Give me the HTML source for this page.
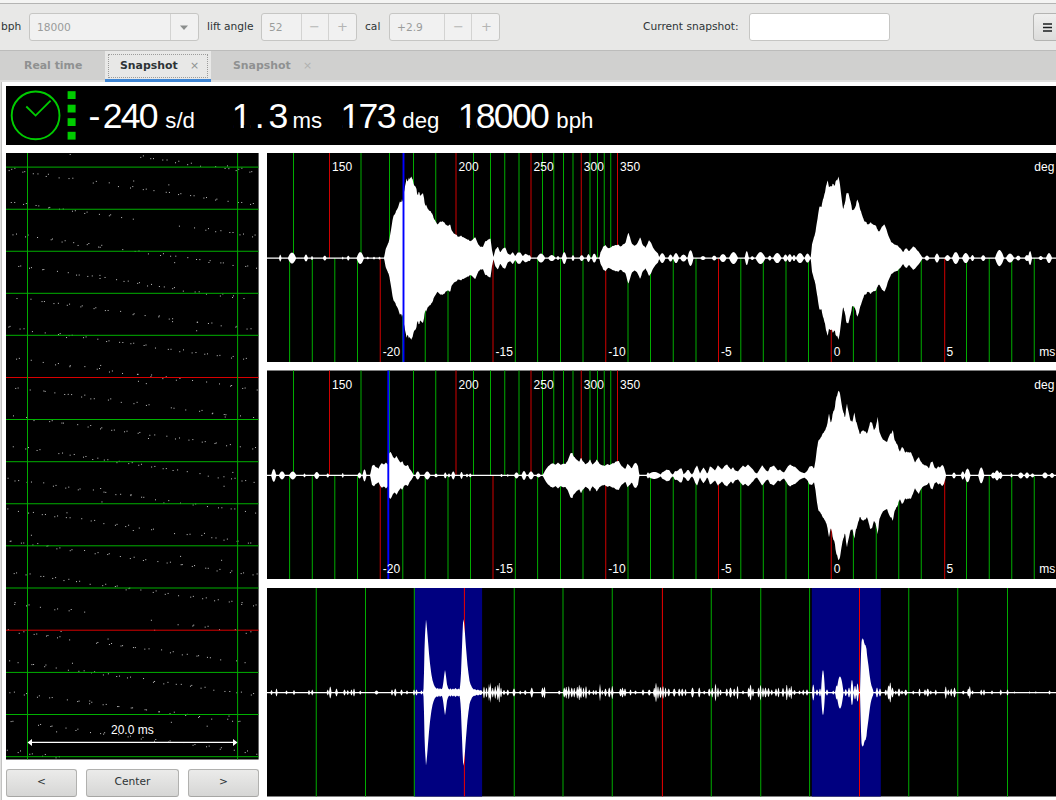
<!DOCTYPE html>
<html><head><meta charset="utf-8"><title>tg</title>
<style>
*{box-sizing:border-box;margin:0;padding:0}
html,body{width:1056px;height:800px;overflow:hidden;background:#fff;font-family:"DejaVu Sans","Liberation Sans",sans-serif;font-size:11px;color:#2e3436}
.abs{position:absolute}
#gfx{position:absolute;left:0;top:0}
#lb{position:absolute;left:0;top:82px;width:2px;height:718px;background:linear-gradient(90deg,#e0e0df 50%,#c2c2c1 50%)}
#top{position:absolute;left:0;top:0;width:1056px;height:51px;background:#e8e8e7;border-bottom:1px solid #bcbcbb}
#top:before{content:"";position:absolute;left:0;top:0;width:100%;height:3px;background:#f4f4f3}
#top:after{content:"";position:absolute;left:0;top:3px;width:100%;height:1px;background:#b4b4b3}
.lbl{position:absolute;top:20px;line-height:14px;font-size:10.67px;color:#2e3436;white-space:nowrap}
.box{position:absolute;top:13px;height:28px;border:1px solid #c6c6c4;border-radius:3px;background:#f1f1f1}
.box .t{position:absolute;left:7px;top:6.5px;line-height:14px;color:#9a9c9b;font-size:10.67px}
.sep{position:absolute;top:0;width:1px;height:26px;background:#d3d3d2}
.pm{position:absolute;top:6px;font-size:13px;line-height:14px;color:#b4b5b4;width:27px;text-align:center}
#tabs{position:absolute;left:0;top:51px;width:1056px;height:31px;background:#d0d0cf;border-bottom:2px solid #dfdfde}
.tab{position:absolute;top:0;height:31px;font-weight:bold;font-size:10.9px;line-height:14px;color:#8f9191}
.tab span{position:absolute;top:8px;white-space:nowrap}
#act{left:105px;width:106px;background:#e8e8e7;color:#2e3436;border-bottom:3px solid #3f86d4}
#act:before{content:"";position:absolute;left:3px;top:3px;right:3px;bottom:1px;border:1px dotted #9c9c9b}
.btn{position:absolute;top:768.5px;height:28px;border:1px solid #b1b1af;border-bottom-color:#a6a6a4;border-radius:3px;background:linear-gradient(#ebebea,#d6d6d5);text-align:center;line-height:24px;font-size:10.67px;color:#2e3436}
</style></head><body>
<svg id="gfx" width="1056" height="800" viewBox="0 0 1056 800" font-family="Liberation Sans, Arial, sans-serif">
<rect x="6" y="86" width="1050" height="59" fill="#000"/>
<circle cx="35.6" cy="115.4" r="23.9" fill="none" stroke="#00cc00" stroke-width="1.9"/>
<path d="M26.3 106.5L35.6 115.6L50.6 100.6" fill="none" stroke="#00cc00" stroke-width="1.8"/>
<rect x="67.6" y="91.2" width="8" height="7.8" fill="#00cc00"/>
<rect x="67.6" y="104.7" width="8" height="7.8" fill="#00cc00"/>
<rect x="67.6" y="118.2" width="8" height="7.8" fill="#00cc00"/>
<rect x="67.6" y="131.8" width="8" height="7.8" fill="#00cc00"/>
<g fill="#fff">
<text x="88.4" y="128" font-size="35.6">-</text>
<text x="102.7" y="128" font-size="35.6" letter-spacing="-1.7">240</text>
<text x="165.3" y="128" font-size="22.2">s/d</text>
<text x="231.7" y="128" font-size="35.6">1</text>
<path d="M233.79 124.9h6.87v3.6h-6.87zM243.8 124.9h6.61v3.6h-6.61z" fill="#000"/>
<text x="254.7" y="128" font-size="35.6">.</text>
<text x="268.5" y="128" font-size="35.6">3</text>
<text x="292.5" y="128" font-size="22.2">ms</text>
<text x="340.5" y="128" font-size="35.6" letter-spacing="-1.7">173</text>
<path d="M342.59 124.9h6.87v3.6h-6.87zM352.6 124.9h6.61v3.6h-6.61z" fill="#000"/>
<text x="402.3" y="128" font-size="22.2">deg</text>
<text x="457.7" y="128" font-size="35.6" letter-spacing="-1.7">18000</text>
<path d="M459.79 124.9h6.87v3.6h-6.87zM469.8 124.9h6.61v3.6h-6.61z" fill="#000"/>
<text x="556.3" y="128" font-size="22.2">bph</text>
</g>
<rect x="6" y="153" width="252.6" height="606.5" fill="#000"/>
<path d="M69.68 154.49h1M142.89 155.9h1M140.28 157.38h1M153.01 158.62h1M150.27 158.69h1M166.55 160h1M162.28 160.03h1M178.3 161.23h1M175.04 162.74h1M190.83 163.21h1M187.16 164.69h1M227.01 165.96h1M200.05 166.23h1M215.18 166.66h1M14.38 168.23h1M241.38 168.23h1M228.37 168.68h1M224.6 168.41h1M11.24 169.3h1M238.24 169.3h1M8.66 170.61h1M235.66 170.61h1M24.26 171.67h1M251.26 171.67h1M22.39 172.14h1M249.39 172.14h1M37.46 173.93h1M32.8 173.76h1M47.9 174.28h1M45.72 176.45h1M58.64 177.9h1M72.35 178.21h1M68.52 178.58h1M133.21 181h1M95.82 181.37h1M92.78 183.05h1M108.75 182.83h1M168.34 184.88h1M117.95 186.6h1M132.28 186.59h1M130.01 188.01h1M145.76 189.14h1M142.81 189.64h1M153.46 190.65h1M168.93 192.45h1M165.74 192.29h1M180.35 193.69h1M178.09 194.58h1M193.59 195.78h1M190.14 195.6h1M206.01 197.55h1M203.41 198.05h1M216.37 199.15h1M215.16 200.09h1M227.59 201.32h1M14.22 202.47h1M241.22 202.47h1M10.77 202.5h1M237.77 202.5h1M25.82 203.52h1M252.82 203.52h1M23.09 204.42h1M250.09 204.42h1M38.29 205.91h1M35.58 205.49h1M49.26 207.43h1M48.16 207.93h1M62.75 209.09h1M58.98 209.23h1M74.82 210.74h1M71.98 211.23h1M86.59 212.11h1M84.26 213.44h1M98.92 214.37h1M110.15 214.84h1M108.88 215.8h1M121.12 217.58h1M132.82 219.18h1M178.92 226.16h1M194.07 227.92h1M207.98 228.61h1M205.35 230.22h1M220.4 230.71h1M215.19 231.72h1M232.5 232.49h1M229.32 232.54h1M16 234.06h1M243 234.06h1M12.48 234.87h1M239.48 234.87h1M27.6 235.04h1M254.6 235.04h1M25.05 236.88h1M252.05 236.88h1M37.06 237.52h1M51.97 239.01h1M50.69 239.79h1M64.65 240.74h1M61.6 242.04h1M73.19 242.66h1M88.36 243.52h1M86.75 244.64h1M101.28 245.31h1M99.66 247.29h1M98.17 247.05h1M77.6 245.44h1M122.25 249.63h1M138.48 251.07h1M134.62 251.44h1M147.93 253.92h1M162.94 253.71h1M160.08 255.49h1M175.3 256.16h1M170.14 256.23h1M187.3 257.67h1M199.35 259.62h1M196.07 259.51h1M209.62 260.63h1M208.43 262.47h1M222.83 262.9h1M220.33 262.9h1M174.16 262.67h1M232.55 265.45h1M20.22 265.97h1M247.22 265.97h1M18.28 266.44h1M245.28 266.44h1M30.96 267.65h1M29.01 268.22h1M256.01 268.22h1M43.33 269.51h1M42.19 269.72h1M56.95 271.36h1M67.79 272.69h1M99.45 275.38h1M78.69 275.05h1M76.07 275.11h1M91.78 275.94h1M87.31 276.42h1M104.55 277.47h1M99.54 278.49h1M116.09 279.69h1M127.76 281.12h1M123.53 281.4h1M138.95 282.66h1M137.19 283.39h1M151.03 284.42h1M147.06 285.98h1M163.81 286.95h1M158.89 286.52h1M173.94 287.6h1M172.2 288.66h1M182.84 291.12h1M198.69 291.82h1M194.63 292.01h1M205.94 294.13h1M222.32 293.98h1M219.87 296.02h1M232.94 295.88h1M232.04 297.52h1M16.49 298.52h1M243.49 298.52h1M30.47 299.22h1M43.91 301.54h1M41.54 301.58h1M57.9 303.31h1M53.45 303.6h1M69.07 304.13h1M66.8 305.3h1M81.73 305.83h1M80.35 306.9h1M95.32 307.76h1M93.57 308.64h1M107.64 310.49h1M104.88 310.58h1M120.11 311.39h1M133.62 313.78h1M132.62 314.67h1M144.62 315.59h1M158.77 315.9h1M158.24 316.92h1M172.12 318.74h1M168.75 319.09h1M172.07 321.65h1M197.08 322.25h1M196.69 322.27h1M211.39 323.01h1M207.93 323.49h1M220.69 325.84h1M9.52 326.37h1M236.52 326.37h1M8.36 327.11h1M235.36 327.11h1M23.52 328.78h1M250.52 328.78h1M19.57 329.05h1M246.57 329.05h1M196.16 330.76h1M31.93 331.6h1M44.72 332.91h1M59.69 333.63h1M57.98 334.53h1M71.71 335.24h1M68.64 335.63h1M85.59 336.94h1M83.05 337.68h1M97.34 339.2h1M66.06 337.55h1M108.48 340.87h1M106.13 341.56h1M122.35 342.51h1M119.12 342.34h1M133.21 343.23h1M130.38 343.73h1M145.5 345h1M143.62 345.49h1M154.97 348.06h1M170.51 349.27h1M167.82 349.36h1M183.01 349.9h1M179.25 351.72h1M195.46 352.54h1M191.62 352.92h1M206.98 353.86h1M204.3 354.23h1M219.38 355.36h1M216.78 355.7h1M232.7 356.44h1M230.97 358.07h1M18.83 358.36h1M245.83 358.36h1M16.12 359.15h1M243.12 359.15h1M30.76 360.27h1M42.74 362.43h1M57.9 363.54h1M55.09 364.87h1M69.76 365.66h1M69.4 366.73h1M84.36 366.63h1M100.18 365.43h1M99.02 368.52h1M96.75 369.2h1M111.89 370.99h1M108.98 372.03h1M122.04 373.44h1M137.56 374.36h1M136.95 374.36h1M151.1 374.96h1M150.42 376.7h1M165.74 376.76h1M162.35 378.66h1M179.43 378.43h1M175.87 380.24h1M192.06 380.47h1M206.12 382.01h1M137.96 381.32h1M219.02 383.94h1M145.84 383.63h1M231.12 385.53h1M230.09 386.15h1M17.63 388.02h1M244.63 388.02h1M15.24 388.45h1M242.24 388.45h1M29.71 390.03h1M256.71 390.03h1M44.67 391.4h1M43.35 390.99h1M64.24 394.5h1M54.35 392.89h1M71.13 394.59h1M67.73 394.37h1M84.3 395.15h1M81.13 397.02h1M93.77 398.72h1M110.24 398.89h1M107.92 400.09h1M90.32 398.92h1M120.78 402.36h1M136.62 402.34h1M133.46 403.7h1M148.53 404.75h1M145.93 405.43h1M173.53 408.24h1M170.82 407.84h1M185.25 409.98h1M201.52 410.41h1M199.14 411.31h1M212.26 413.19h1M211.81 413.73h1M225.4 414.75h1M223.74 414.56h1M12.98 415.89h1M239.98 415.89h1M224.73 417.03h1M26.11 417.54h1M253.11 417.54h1M33.5 420.6h1M51.71 420.69h1M49.18 421.64h1M62.96 423.1h1M61.43 423.07h1M77.2 424.68h1M90.22 425.52h1M87.64 427.03h1M101.28 427.82h1M100.01 428.92h1M113.83 430.04h1M111.25 430.32h1M126.51 431.19h1M124.06 431.81h1M139.34 432.45h1M137.68 433.3h1M154.24 434.94h1M149.34 435.3h1M166.36 436.21h1M147.98 438.48h1M179.02 437.99h1M174.96 438.98h1M192.33 439.58h1M188.45 440.14h1M204.74 441.64h1M201.78 442.14h1M215.74 442.94h1M214.5 443.54h1M229.86 444.61h1M226.1 445.79h1M12.79 446.79h1M239.79 446.79h1M28.03 447.55h1M255.03 447.55h1M25.25 448.97h1M252.25 448.97h1M39.46 449.67h1M36.59 450.49h1M62.04 453.05h1M58.35 453.62h1M73.74 454.46h1M69.64 455.18h1M85.45 456.49h1M83.02 457.17h1M97.34 458.18h1M92.26 459.53h1M107.34 459.74h1M103.84 460.06h1M118.71 461.32h1M116.44 462.66h1M131.72 462.66h1M128.25 463.62h1M140.96 464.28h1M138.28 465.25h1M154.36 466.44h1M151.12 467.03h1M165.8 468.57h1M162.66 468.76h1M177.12 469.94h1M172.59 470.5h1M186.77 471.66h1M232.33 472.42h1M199.51 473.63h1M207.77 476.18h1M223.44 476.78h1M217.69 477.92h1M7.56 478.27h1M234.56 478.27h1M231.03 478.89h1M18.18 480.6h1M245.18 480.6h1M14.5 480.99h1M241.5 480.99h1M30.96 482.04h1M26.63 482.39h1M253.63 482.39h1M43.22 482.87h1M223.57 486.25h1M55.52 485.42h1M52.91 486.21h1M68.25 487.14h1M65.27 488.1h1M79.55 488.96h1M77.79 489.87h1M92.88 489.98h1M100.16 488.53h1M105.28 492.38h1M103.51 492.11h1M120.16 494.3h1M115.37 494.67h1M130.52 494.62h1M130.37 495.58h1M143.29 497.31h1M141.11 497.21h1M155.01 499.82h1M101.48 501.93h1M168.26 500.63h1M163.4 503.01h1M180.03 503.15h1M195.21 503.95h1M192.65 504.99h1M206.94 506.56h1M221.36 507.79h1M217.97 507.86h1M7.32 508.95h1M234.32 508.95h1M230.66 508.95h1M66.48 512.8h1M17.93 511.43h1M244.93 511.43h1M32.91 512.43h1M28.11 513.09h1M255.11 513.09h1M44.91 514.47h1M41.8 514.66h1M57.07 515.96h1M54.29 516.77h1M69.6 517.77h1M65.87 517.64h1M81.24 518.73h1M94.16 520.43h1M90.69 520.97h1M103.36 523.65h1M116.54 524.37h1M114.93 525.27h1M128.11 525.24h1M125.22 526.59h1M138.79 528.05h1M152.98 529.13h1M151.13 529.73h1M132.79 530.52h1M203.98 533.39h1M174.06 533.61h1M189.54 534.22h1M186.68 534.6h1M201.35 535.41h1M30.9 535.25h1M215.49 537.98h1M211.3 537.74h1M226.85 539.08h1M223.53 540.17h1M10.51 541.14h1M237.51 541.14h1M9.7 541.35h1M236.7 541.35h1M23.22 543h1M250.22 543h1M20.89 543.11h1M247.89 543.11h1M37.28 543.59h1M32.4 545.02h1M47.5 545.7h1M46.51 546.17h1M59.38 547.9h1M56.39 548.85h1M71.48 549.73h1M69.73 550.69h1M84.08 550.51h1M97.55 552.63h1M94.68 553.77h1M108.74 553.72h1M107.21 554.55h1M180.08 556.38h1M119.85 556.53h1M133.66 557.23h1M129.84 558.57h1M145.27 559.68h1M142.91 560.52h1M157.36 561.59h1M221.1 560.3h1M169.92 562.2h1M166.65 563.03h1M181.74 564.58h1M180.65 564.73h1M194.06 565.6h1M191.8 566.44h1M207.73 568.32h1M205.26 568.19h1M219.45 569.39h1M216.59 570.96h1M231.31 570.95h1M229.9 572.61h1M16.07 572.9h1M243.07 572.9h1M13.7 573.6h1M240.7 573.6h1M29.61 573.95h1M256.61 573.95h1M25.56 574.9h1M252.56 574.9h1M43.22 576.43h1M40.36 576.43h1M55.1 577.61h1M52.22 578.42h1M68.35 579.32h1M63.47 580.59h1M79.13 581.25h1M76.02 581.63h1M89.67 584.31h1M105.22 584.25h1M102.22 585.67h1M116.7 585.97h1M114.87 586.52h1M129.24 588.12h1M128.46 588.6h1M125.65 589.89h1M140.36 590.03h1M155.64 590.93h1M152.75 592.42h1M167.61 593.44h1M164.78 594.34h1M178.08 595.75h1M192.85 596.36h1M190.22 597.15h1M205.79 597.87h1M202.18 598.75h1M217.76 599.77h1M214.11 600.8h1M231.4 601.29h1M228.77 601.96h1M14.58 602.59h1M241.58 602.59h1M14.22 604.44h1M241.22 604.44h1M28.56 604.93h1M255.56 604.93h1M26.04 605.88h1M253.04 605.88h1M39.88 607.3h1M57.09 608.93h1M54.32 609.81h1M70.71 609.5h1M68.64 610.82h1M84.18 612.1h1M150.89 620.28h1M177.62 624.77h1M193.23 625.13h1M192.3 626.02h1M207.58 626.29h1M204.68 627.11h1M154.19 630.29h1M219.04 629.65h1M7.79 629.63h1M234.79 629.63h1M60.57 631.46h1M23.38 631.8h1M250.38 631.8h1M18.73 633.33h1M245.73 633.33h1M36.23 634.01h1M33.66 634.4h1M47.45 635.56h1M45.99 636.07h1M59.44 636.74h1M57.02 637.87h1M69.13 639.92h1M107.58 639.06h1M97.33 642.47h1M96.08 643.27h1M111.06 643.51h1M108.93 644.53h1M122.07 645.66h1M120.53 646.03h1M134.83 647.58h1M132.96 647.58h1M148.54 648.84h1M144.32 649.13h1M161.1 649.88h1M172.73 651.73h1M169.93 652.82h1M186.77 654.3h1M181.82 654.89h1M198.09 655.71h1M196.49 656.12h1M209.87 657.75h1M206.95 657.37h1M220.2 659.89h1M9.15 660.85h1M236.15 660.85h1M71.96 663.26h1M17.59 662.71h1M244.59 662.71h1M33.09 664.5h1M31.42 664.61h1M45.42 665.03h1M44.19 666.71h1M55.73 668.03h1M67.9 670.24h1M83.66 670.85h1M78.37 671.3h1M94.1 671.84h1M90.99 672.83h1M107.88 673.82h1M102.89 674.96h1M119.02 676.08h1M116.22 676.51h1M130.04 677.11h1M126.97 677.94h1M143.06 678.55h1M154.07 681.46h1M152.98 682.29h1M167.46 682.37h1M163.29 683.89h1M180.77 684.36h1M175.78 684.33h1M191.26 685.39h1M189.98 686.21h1M204.57 687.28h1M200.55 688.18h1M213.34 690.23h1M229.3 691.51h1M224.43 691.45h1M13.88 692.11h1M240.88 692.11h1M9.4 692.78h1M236.4 692.78h1M26.12 693.57h1M253.12 693.57h1M23.82 695h1M250.82 695h1M38.83 695.84h1M36.94 697.25h1M51.69 697.56h1M49.14 697.9h1M66.87 699.89h1M89.27 700.99h1M78.55 701.11h1M77.18 701.57h1M91.28 702.26h1M89.14 703.76h1M105.72 704.42h1M102.65 704.77h1M118.36 706.57h1M117.16 706.56h1M132.08 707.85h1M130.74 708.01h1M146.06 709.95h1M144.6 709.74h1M158.62 711.59h1M158.56 712.05h1M173.8 712.19h1M169.53 713.78h1M187.05 714.39h1M185.19 715.43h1M199.07 716.52h1M198.12 717.48h1M228.51 716.09h1M211.21 719.13h1M227.25 719.21h1M170.85 722.31h1M12.41 721.31h1M239.41 721.31h1M10.63 721.58h1M237.63 721.58h1M232.08 721.26h1M206.68 726.2h1M40.11 724.46h1M38.03 725.3h1M51.52 726.06h1M50.34 726.5h1M65.51 728.09h1M56.11 731.86h1M77.39 729.17h1M75.46 730.51h1M100.1 733.62h1M90 732.58h1M104.16 732.74h1M103.14 734.14h1M118.11 734.74h1M130.04 736.17h1M127.6 736.9h1M142.49 737.41h1M140.78 739.04h1M155.28 739.51h1M154.03 741.24h1M169.6 740.88h1M168.14 742.11h1M183.31 742.55h1M194.46 744.52h1M192.56 745.27h1M208.69 746.1h1M206.05 746.78h1M220.86 747.71h1M219.74 749.25h1M6.8 750.25h1M233.8 750.25h1M20 750.95h1M247 750.95h1M17.7 752.57h1M244.7 752.57h1M31.83 753.87h1M29.32 754.28h1M256.32 754.28h1M44.8 754.48h1M42.17 756.24h1M58.84 756.72h1M55.55 757.83h1" stroke="#c4c4c4" stroke-width="1" fill="none"/>
<rect x="6" y="166.6" width="252.6" height="1" fill="#00b000"/>
<rect x="6" y="208.75" width="252.6" height="1" fill="#00b000"/>
<rect x="6" y="250.75" width="252.6" height="1" fill="#00b000"/>
<rect x="6" y="292.8" width="252.6" height="1" fill="#00b000"/>
<rect x="6" y="334.8" width="252.6" height="1" fill="#00b000"/>
<rect x="6" y="377" width="252.6" height="1" fill="#d80000"/>
<rect x="6" y="419" width="252.6" height="1" fill="#00b000"/>
<rect x="6" y="461.2" width="252.6" height="1" fill="#00b000"/>
<rect x="6" y="503.25" width="252.6" height="1" fill="#00b000"/>
<rect x="6" y="545.3" width="252.6" height="1" fill="#00b000"/>
<rect x="6" y="587.5" width="252.6" height="1" fill="#00b000"/>
<rect x="6" y="629.7" width="252.6" height="1" fill="#d80000"/>
<rect x="6" y="671.9" width="252.6" height="1" fill="#00b000"/>
<rect x="6" y="714" width="252.6" height="1" fill="#00b000"/>
<rect x="6" y="756.2" width="252.6" height="1" fill="#00b000"/>
<rect x="27" y="153" width="1" height="606.5" fill="#00ac00"/>
<rect x="237.1" y="153" width="1" height="606.5" fill="#00ac00"/>
<path d="M27.5 742.4L32 738.9V741.7H233V738.9L237.5 742.4L233 745.9V743.1H32V745.9Z" fill="#fff"/>
<text x="132.3" y="734.4" font-size="12" fill="#fff" text-anchor="middle">20.0 ms</text>
<rect x="267" y="153" width="789" height="209" fill="#000"/>
<rect x="293" y="153" width="1" height="105.1" fill="#00ac00"/>
<rect x="329" y="153" width="1" height="105.1" fill="#d00000"/>
<rect x="360.5" y="153" width="1" height="105.1" fill="#00ac00"/>
<rect x="389" y="153" width="1" height="105.1" fill="#00ac00"/>
<rect x="413" y="153" width="1" height="105.1" fill="#00ac00"/>
<rect x="435.25" y="153" width="1" height="105.1" fill="#00ac00"/>
<rect x="455.5" y="153" width="1" height="105.1" fill="#d00000"/>
<rect x="473" y="153" width="1" height="105.1" fill="#00ac00"/>
<rect x="490" y="153" width="1" height="105.1" fill="#00ac00"/>
<rect x="504.25" y="153" width="1" height="105.1" fill="#00ac00"/>
<rect x="518.5" y="153" width="1" height="105.1" fill="#00ac00"/>
<rect x="530.5" y="153" width="1" height="105.1" fill="#d00000"/>
<rect x="542" y="153" width="1" height="105.1" fill="#00ac00"/>
<rect x="553.25" y="153" width="1" height="105.1" fill="#00ac00"/>
<rect x="563" y="153" width="1" height="105.1" fill="#00ac00"/>
<rect x="572.5" y="153" width="1" height="105.1" fill="#00ac00"/>
<rect x="580.75" y="153" width="1" height="105.1" fill="#d00000"/>
<rect x="589.5" y="153" width="1" height="105.1" fill="#00ac00"/>
<rect x="597" y="153" width="1" height="105.1" fill="#00ac00"/>
<rect x="603.75" y="153" width="1" height="105.1" fill="#00ac00"/>
<rect x="610.25" y="153" width="1" height="105.1" fill="#00ac00"/>
<rect x="617" y="153" width="1" height="105.1" fill="#d00000"/>
<rect x="289.1" y="258.1" width="1" height="103.9" fill="#00ac00"/>
<rect x="311.8" y="258.1" width="1" height="103.9" fill="#00ac00"/>
<rect x="334.3" y="258.1" width="1" height="103.9" fill="#00ac00"/>
<rect x="357" y="258.1" width="1" height="103.9" fill="#00ac00"/>
<rect x="379.75" y="258.1" width="1" height="103.9" fill="#d00000"/>
<rect x="402.3" y="258.1" width="1" height="103.9" fill="#00ac00"/>
<rect x="424.75" y="258.1" width="1" height="103.9" fill="#00ac00"/>
<rect x="447.5" y="258.1" width="1" height="103.9" fill="#00ac00"/>
<rect x="470" y="258.1" width="1" height="103.9" fill="#00ac00"/>
<rect x="492.5" y="258.1" width="1" height="103.9" fill="#d00000"/>
<rect x="514.8" y="258.1" width="1" height="103.9" fill="#00ac00"/>
<rect x="537.1" y="258.1" width="1" height="103.9" fill="#00ac00"/>
<rect x="560" y="258.1" width="1" height="103.9" fill="#00ac00"/>
<rect x="582.5" y="258.1" width="1" height="103.9" fill="#00ac00"/>
<rect x="605.25" y="258.1" width="1" height="103.9" fill="#d00000"/>
<rect x="627.5" y="258.1" width="1" height="103.9" fill="#00ac00"/>
<rect x="650" y="258.1" width="1" height="103.9" fill="#00ac00"/>
<rect x="672.75" y="258.1" width="1" height="103.9" fill="#00ac00"/>
<rect x="695.5" y="258.1" width="1" height="103.9" fill="#00ac00"/>
<rect x="718" y="258.1" width="1" height="103.9" fill="#d00000"/>
<rect x="740.3" y="258.1" width="1" height="103.9" fill="#00ac00"/>
<rect x="762.8" y="258.1" width="1" height="103.9" fill="#00ac00"/>
<rect x="785.5" y="258.1" width="1" height="103.9" fill="#00ac00"/>
<rect x="808" y="258.1" width="1" height="103.9" fill="#00ac00"/>
<rect x="830.75" y="258.1" width="1" height="103.9" fill="#d00000"/>
<rect x="852.9" y="258.1" width="1" height="103.9" fill="#00ac00"/>
<rect x="875.75" y="258.1" width="1" height="103.9" fill="#00ac00"/>
<rect x="898.25" y="258.1" width="1" height="103.9" fill="#00ac00"/>
<rect x="920.75" y="258.1" width="1" height="103.9" fill="#00ac00"/>
<rect x="944.2" y="258.1" width="1" height="103.9" fill="#d00000"/>
<rect x="966" y="258.1" width="1" height="103.9" fill="#00ac00"/>
<rect x="988.75" y="258.1" width="1" height="103.9" fill="#00ac00"/>
<rect x="1011.25" y="258.1" width="1" height="103.9" fill="#00ac00"/>
<rect x="1033.75" y="258.1" width="1" height="103.9" fill="#00ac00"/>
<path d="M267 257.52 279 257.52 279.5 255.93 280 254.75 280.5 254.75 281 255.93 281.5 257.52 287.5 257.52 288 257.46 288.5 256.39 289 255.44 289.5 254.61 290 253.91 290.5 253.35 291 252.94 291.5 252.68 292 252.6 292.5 252.68 293 252.94 293.5 253.35 294 253.91 294.5 254.61 295 255.44 295.5 256.39 296 257.46 296.5 257.52 304 257.52 304.5 256.63 305 255.54 305.5 254.84 306 254.6 306.5 254.84 307 255.54 307.5 256.63 308 257.52 310.5 257.52 311 257.4 311.5 256.45 312 256.1 312.5 256.45 313 257.4 313.5 257.52 323 257.52 323.5 256.63 324 255.98 324.5 255.64 325 255.64 325.5 255.98 326 256.63 326.5 257.52 341.5 257.52 342 257.47 342.5 256.7 343 256.7 343.5 257.47 344 257.52 346.5 257.52 347 257.36 347.5 256.27 348 255.68 348.5 255.68 349 256.27 349.5 257.36 350 257.52 356.5 257.52 357 256.64 357.5 255.43 358 254.38 358.5 253.51 359 252.83 359.5 252.36 360 252.13 360.5 252.13 361 252.36 361.5 252.83 362 253.51 362.5 254.38 363 255.43 363.5 256.64 364 257.52 366.5 257.52 367 257.15 367.5 256.84 368 256.84 368.5 257.15 369 257.52 372.5 257.52 373 257.4 373.5 256.96 374 256.8 374.5 256.96 375 257.4 375.5 257.52 378 257.52 378.5 257.4 379 256.96 379.5 256.8 380 256.96 380.5 257.4 381 257.52 384 257.52 384.5 255.33 385 252.69 385.5 250.05 386 248.26 386.5 247.32 387 245.99 387.5 245.02 388 243.56 388.5 242.69 389 240.87 389.5 239.06 390 235.72 390.5 232.83 391 229.93 391.5 226.85 392 223.57 392.5 220.29 393 217.96 393.5 215.89 394 214.96 394.5 214.69 395 213.77 395.5 212.95 396 210.93 396.5 210.17 397 209.41 397.5 208.57 398 207.43 398.5 205.91 399 204.29 399.5 202.77 400 201.25 400.5 202.33 401 201.98 401.5 201.63 402 199.1 402.5 201.64 403 200.37 403.5 196.89 404 191.95 404.5 189.72 405 186.15 405.5 183.89 406 181.62 406.5 178.38 407 179.91 407.5 181.44 408 180.7 408.5 179.15 409 177.61 409.5 179.38 410 178.53 410.5 177.69 411 177.28 411.5 176.44 412 178.73 412.5 178.73 413 181.1 413.5 183.46 414 184.92 414.5 185.64 415 186.37 415.5 186.54 416 187.82 416.5 189.1 417 193.18 417.5 194.4 418 195.14 418.5 191.96 419 192.22 419.5 192.48 420 195.65 420.5 195.52 421 195.03 421.5 194.41 422 193.91 422.5 193.42 423 193.37 423.5 195.63 424 197.89 424.5 202.26 425 204.43 425.5 206.12 426 204.5 426.5 205.77 427 207.05 427.5 208.37 428 209.13 428.5 209.39 429 210.55 429.5 210.8 430 211.05 430.5 211.11 431 212.12 431.5 213.14 432 213.36 432.5 214.39 433 215.42 433.5 217.65 434 218.65 434.5 219.65 435 220.36 435.5 221.25 436 222 436.5 222.95 437 223.71 437.5 224.46 438 223.92 438.5 223.41 439 222.89 439.5 222.37 440 221.86 440.5 221.47 441 221.92 441.5 221.66 442 221.41 442.5 221.34 443 221.59 443.5 222.34 444 221.95 444.5 222.72 445 223.5 445.5 224.4 446 224.66 446.5 224.92 447 225.42 447.5 225.67 448 225.55 448.5 225.67 449 225.17 449.5 224.68 450 224.53 450.5 225.51 451 227.97 451.5 230.11 452 230.85 452.5 231.6 453 232.27 453.5 233.02 454 233.77 454.5 233.86 455 234.2 455.5 234.53 456 234.61 456.5 234.95 457 235.29 457.5 236.48 458 236.64 458.5 236.64 459 236.45 460 236.45 460.5 235.87 461.5 235.87 462 236.85 462.5 237.1 463 237.34 463.5 237.32 464 237.57 464.5 237.9 465 238.1 465.5 238.43 466 238.77 466.5 238.97 467 239.3 467.5 239.64 468 239.61 468.5 239.79 469 239.96 469.5 240.89 470 241.05 470.5 241.21 471 240.58 471.5 240.75 472 240.24 472.5 239.7 473 239.18 473.5 238.67 474 238.2 474.5 237.69 475 237.17 475.5 237.78 476 239.05 476.5 240.32 477 241.47 477.5 242.75 478 243.65 478.5 244.83 479 245.32 479.5 245.81 480 246.38 480.5 246.75 481 246.99 481.5 246.53 482 246.78 482.5 247.04 483 246.85 483.5 245.6 484 244.34 484.5 242.91 485 241.64 485.5 240.88 486 241.33 486.5 241.08 487 240.84 487.5 240.08 488 239.76 488.5 239.36 489 239.4 489.5 239.01 490 238.61 490.5 239.06 491 242.6 491.5 246.15 492 250.22 492.5 252.31 493 254.64 493.5 256.98 494 254.98 494.5 252.98 495 250.97 495.5 249.59 496 248.84 496.5 248.44 497 247.72 497.5 246.99 498 247.1 498.5 248.32 499 249.55 499.5 250.65 500 251.89 500.5 252.1 501 251.34 501.5 250.59 502 249.84 502.5 248.91 503 248.4 503.5 248.14 504 248.01 504.5 247.76 505 247.5 505.5 248.1 506 249.35 506.5 250.6 507 251.96 507.5 253.1 508 253.85 508.5 254.1 509 254.35 509.5 254.6 510 254.85 510.5 254.68 511 254.08 511.5 253.48 512 252.88 512.5 252.28 513 252.4 513.5 253.25 514 254.1 514.5 254.95 515 255.8 515.5 255.85 516 255.1 516.5 254.35 517 253.6 517.5 252.85 518 252.48 520 252.48 520.5 252.85 521 253.6 521.5 254.35 522 255.1 522.5 255.85 523 255.98 523.5 255.48 524 254.98 524.5 254.48 525 253.98 525.5 253.84 526 254.07 526.5 254.29 527 254.52 527.5 254.75 528 254.98 528.5 255.56 529 255.15 529.5 255.15 530 255.56 530.5 256.33 531 257.41 531.5 257.52 537 257.52 537.5 256.7 538 255.93 538.5 255.25 539 254.67 539.5 254.21 540 253.87 540.5 253.67 541 253.6 541.5 253.67 542 253.87 542.5 254.21 543 254.67 543.5 255.25 544 255.93 544.5 256.7 545 257.52 548 257.52 548.5 257.37 549 256.76 549.5 256.24 550 255.8 550.5 255.46 551 255.23 551.5 255.11 552 255.11 552.5 255.23 553 255.46 553.5 255.8 554 256.24 554.5 256.76 555 257.37 555.5 257.52 556.5 257.52 557 257.03 557.5 256.34 558 256.1 558.5 256.34 559 257.03 559.5 257.52 561.5 257.52 562 256.97 562.5 255.15 563 253.71 563.5 252.69 564 252.17 564.5 252.17 565 252.69 565.5 253.71 566 255.15 566.5 256.97 567 257.52 571.5 257.52 572 256.49 572.5 255.46 573 255.1 573.5 255.46 574 256.49 574.5 257.52 579.5 257.52 580 256.63 580.5 255.9 581 255.4 581.5 255.13 582 255.13 582.5 255.4 583 255.9 583.5 256.63 584 257.52 586.5 257.52 587 256.41 587.5 255.17 588 254.38 588.5 254.1 589 254.38 589.5 255.17 590 256.41 590.5 257.52 591.5 257.52 592 257.25 592.5 255.89 593 254.81 593.5 254.04 594 253.65 594.5 253.65 595 254.04 595.5 254.81 596 255.89 596.5 257.25 597 257.52 599 257.52 599.5 256.95 600 254.65 600.5 252.35 601 251.42 601.5 250.56 602 249.58 602.5 248.61 603 247.04 603.5 246.52 604 246.01 604.5 245.9 605 245.41 605.5 244.91 606 245.76 606.5 246.5 607 247.24 607.5 247.57 608 248.34 608.5 248.08 609 248.19 609.5 247.95 610 247.7 610.5 247.43 611 247.19 611.5 246.94 612 246.36 612.5 246.11 613 245.85 613.5 245.9 614 245.75 614.5 245.6 615 245.16 615.5 245.01 616 244.91 616.5 245.14 617 245.04 617.5 244.94 618 244.42 618.5 244.68 619 244.93 619.5 245.98 620 246.22 620.5 246.47 621 246.21 621.5 245.96 622 245.72 622.5 244.74 623 244.48 623.5 243.97 624 244.21 624.5 243.72 625 243.23 625.5 242.63 626 240.88 626.5 239.12 627 236.96 627.5 235.32 628 233.81 628.5 232.64 629 234.29 629.5 235.94 630 237.36 630.5 239.14 631 240.93 631.5 242.48 632 243.64 632.5 244.15 633 244.55 633.5 245.06 634 245.57 634.5 245.72 635 245.46 635.5 245.2 636 244.81 636.5 244.55 637 243.87 637.5 243.02 638 241.94 638.5 240.85 639 239.95 639.5 238.71 640 237.47 640.5 238.11 641 239.59 641.5 241.07 642 243.2 642.5 244.25 643 245.3 643.5 245.71 644 246.03 644.5 246.35 645 247.34 645.5 247.64 646 246.73 646.5 245.76 647 244.84 647.5 243.93 648 242.44 648.5 241.36 649 240.28 649.5 240.7 650 241.39 650.5 242.09 651 242.64 651.5 243.87 652 245.1 652.5 246.33 653 247.56 653.5 248.29 654 249.06 654.5 249.79 655 250.53 655.5 251.08 656 251.58 656.5 252.1 657 252.6 657.5 253.1 658 253.6 658.5 255.1 659 256.6 659.5 256.72 660 255.59 660.5 254.65 661 253.9 661.5 253.39 662 253.13 662.5 253.13 663 253.39 663.5 253.9 664 254.65 664.5 255.59 665 256.72 665.5 257.52 668 257.52 668.5 256.88 669 255.93 669.5 255.21 670 254.75 670.5 254.6 671 254.75 671.5 255.21 672 255.93 672.5 256.88 673 257.52 673.5 256.62 674 255.42 674.5 254.44 675 253.71 675.5 253.25 676 253.1 676.5 253.25 677 253.71 677.5 254.44 678 255.42 678.5 256.62 679 257.52 680 257.52 680.5 257.19 681 256.45 681.5 255.81 682 255.3 682.5 254.91 683 254.68 683.5 254.6 684 254.68 684.5 254.91 685 255.3 685.5 255.81 686 256.45 686.5 257.19 687 257.52 687.5 257.52 688 255.73 688.5 253.81 689 252.24 689.5 251.17 690 250.42 690.5 250.18 691 250.42 691.5 251.12 692 252.24 692.5 253.81 693 255.73 693.5 257.52 700 257.52 700.5 257.51 701 257.03 701.5 256.64 702 256.34 702.5 256.16 703 256.1 703.5 256.16 704 256.34 704.5 256.64 705 257.03 705.5 257.51 706 257.52 712 257.52 712.5 256.87 713 256.27 713.5 255.85 714 255.63 714.5 255.63 715 255.85 715.5 256.27 716 256.87 716.5 257.52 719.5 257.52 720 256.71 720.5 255.96 721 255.31 721.5 254.79 722 254.41 722.5 254.18 723 254.1 723.5 254.18 724 254.41 724.5 254.79 725 255.31 725.5 255.96 726 256.71 726.5 257.52 729 257.52 729.5 256.86 730 255.82 730.5 254.88 731 254.07 731.5 253.38 732 252.83 732.5 252.43 733 252.18 733.5 252.1 734 252.18 734.5 252.43 735 252.83 735.5 253.38 736 254.07 736.5 254.88 737 255.82 737.5 256.86 738 257.52 744.5 257.52 745 256.49 745.5 253.98 746 252.17 746.5 251.17 747 251.32 747.5 252.17 748 253.98 748.5 256.49 749 257.52 750.5 257.52 751 256.92 751.5 256.41 752 256.13 752.5 256.13 753 256.41 753.5 256.92 754 257.52 755.5 257.52 756 256.97 756.5 256.01 757 255.15 757.5 254.38 758 253.71 758.5 253.14 759 252.69 759.5 252.36 760 252.17 760.5 252.1 761 252.17 761.5 252.36 762 252.69 762.5 253.14 763 253.71 763.5 254.38 764 255.15 764.5 256.01 765 256.97 765.5 257.52 768 257.52 768.5 256.63 769 255.98 769.5 255.64 770 255.64 770.5 255.98 771 256.63 771.5 257.52 773 257.52 773.5 257.01 774 256.1 774.5 255.29 775 254.6 775.5 254.02 776 253.57 776.5 253.27 777 253.12 777.5 253.12 778 253.27 778.5 253.57 779 254.02 779.5 254.6 780 255.29 780.5 256.1 781 257.01 781.5 257.52 783 257.52 783.5 256.88 784 255.93 784.5 255.21 785 254.75 785.5 254.6 786 254.75 786.5 255.21 787 255.93 787.5 256.88 788 256.13 788.5 255.17 789 254.49 789.5 254.14 790 254.14 790.5 254.49 791 255.17 791.5 256.13 792 257.35 792.5 256.84 793 255.9 793.5 255.31 794 255.1 794.5 255.31 795 255.9 795.5 256.84 796 257.51 796.5 256.54 797 255.68 797.5 254.93 798 254.29 798.5 253.78 799 253.4 799.5 253.18 800 253.1 800.5 253.18 801 253.4 801.5 253.78 802 254.29 802.5 254.93 803 255.68 803.5 256.54 804 257.51 804.5 257.52 805 256.77 805.5 255.69 806 254.81 806.5 254.15 807 253.74 807.5 253.6 808 253.74 808.5 254.15 809 254.81 809.5 255.69 810 256.77 810.5 257.52 811 254.85 811.5 249.64 812 244.51 812.5 242.58 813 240.87 813.5 238.97 814 237.07 814.5 235.88 815 233.8 815.5 231.72 816 227.91 816.5 224.87 817 221.82 817.5 219.09 818 215.16 818.5 211.97 819 209.04 819.5 206.56 820 206.87 820.5 206.4 821 206.72 821.5 207.03 822 203.63 822.5 201.42 823 199.21 823.5 198.2 824 196.03 824.5 193.87 825 192.62 825.5 189.31 826 185.99 826.5 184.76 827 182.58 827.5 180.4 828 181.95 828.5 184.65 829 187.36 829.5 186.83 830 186.48 830.5 186.13 831 186.11 831.5 186.35 832 186.6 832.5 183.71 833 183.97 833.5 183.92 834 185.76 834.5 185.4 835 185.05 835.5 181.68 836 180.72 836.5 179.75 837 180.8 837.5 179.54 838 178.29 838.5 176.46 839 178.98 839.5 181.51 840 184.82 840.5 188.99 841 193.16 841.5 197.26 842 201.2 842.5 205.13 843 208.18 843.5 208.65 844 205.59 844.5 204.61 845 202.46 845.5 200.32 846 195.81 846.5 193.58 847 192.85 847.5 193.47 848 192.76 848.5 193.47 849 195.57 849.5 197.71 850 199.85 850.5 201.19 851 203.42 851.5 205.64 852 209.71 852.5 210.01 853 210.32 853.5 209.55 854 209.86 854.5 208.43 855 207.84 855.5 206.44 856 205.21 856.5 201.68 857 200.58 857.5 199.47 858 201.21 858.5 202.49 859 203.76 859.5 206.79 860 208.64 860.5 210.49 861 211.33 861.5 213.22 862 214.66 862.5 216.2 863 217.64 863.5 218.73 864 220.61 864.5 221.34 865 222.07 865.5 221.49 866 222 866.5 222.25 867 224.05 867.5 224.3 868 224.54 868.5 224.16 869 223.92 869.5 223.67 870 222.75 870.5 222.5 871 222.5 871.5 223.61 872 223.85 872.5 224.09 873 224.59 873.5 224.83 874 225.08 874.5 225.07 875 225.32 875.5 225.56 876 225.77 876.5 227.26 877 228.76 877.5 229.13 878 230.68 878.5 231.09 879 231.79 879.5 231.08 880 230.38 880.5 229.44 881 228.52 881.5 227.6 882 226.4 882.5 226.16 883 225.91 883.5 225.1 884 224.84 884.5 224.59 885 225.76 885.5 227.03 886 228.29 886.5 229.47 887 231.28 887.5 233.09 888 234.59 888.5 236.02 889 237.05 889.5 238.13 890 239.16 890.5 240.18 891 241.68 891.5 242.17 892 242.66 892.5 242.8 893 243.3 893.5 243.68 894 244.26 894.5 244.5 895 244.75 895.5 244.77 896 245.02 896.5 245.27 897 245.15 897.5 245.41 898 245.67 898.5 246.7 899 247.19 899.5 247.67 900 248.01 900.5 248.5 901 249.12 901.5 249.86 902 250.6 902.5 251.34 903 251.88 903.5 251.72 904 250.63 904.5 249.88 905 248.83 905.5 248.83 906 248.42 907 248.42 907.5 249.52 908 250.13 908.5 250.73 909 251.3 909.5 250.82 910 250.33 910.5 249.44 911 248.93 911.5 248.42 912 247.96 912.5 247.25 913 246.54 913.5 246.57 914 246.92 914.5 247.26 915 247.49 915.5 248.11 916 248.72 916.5 249.45 917 250.06 917.5 250.67 918 250.99 918.5 251.62 919 252.35 919.5 253.06 920 253.78 920.5 254.49 921 255.21 921.5 255.92 922 256.64 922.5 257.35 923 257.52 924.5 257.52 925 257.23 925.5 256.55 926 256.03 926.5 255.71 927 255.6 927.5 255.71 928 256.03 928.5 256.55 929 257.23 929.5 257.52 934.5 257.52 935 256.54 935.5 255.31 936 254.38 936.5 253.8 937 253.6 937.5 253.8 938 254.38 938.5 255.31 939 256.54 939.5 257.52 944.5 257.52 945 257.21 945.5 256.49 946 255.9 946.5 255.46 947 255.19 947.5 255.1 948 255.19 948.5 255.46 949 255.9 949.5 256.49 950 257.21 950.5 257.52 952 257.52 952.5 256.64 953 255.43 953.5 254.38 954 253.51 954.5 252.83 955 252.36 955.5 252.13 956 252.13 956.5 252.36 957 252.83 957.5 253.51 958 254.38 958.5 255.43 959 256.64 959.5 257.52 962 257.52 962.5 256.88 963 255.87 963.5 255 964 254.27 964.5 253.71 965 253.32 965.5 253.12 966 253.12 966.5 253.32 967 253.71 967.5 254.27 968 255 968.5 255.87 969 256.88 969.5 257.52 970.5 257.52 971 256.84 971.5 255.9 972 255.31 972.5 255.1 973 255.31 973.5 255.9 974 256.84 974.5 257.52 981 257.52 981.5 256.63 982 255.9 982.5 255.4 983 255.13 983.5 255.13 984 255.4 984.5 255.9 985 256.63 985.5 257.52 995 257.52 995.5 256.45 996 255.05 996.5 253.81 997 252.73 997.5 251.67 998 250.92 998.5 250.38 999 250.12 999.5 250.01 1000 250.12 1000.5 250.79 1001 251.31 1001.5 252.02 1002 252.73 1002.5 253.81 1003 255.05 1003.5 256.45 1004 257.52 1006 257.52 1006.5 256.7 1007 255.93 1007.5 255.25 1008 254.67 1008.5 254.21 1009 253.87 1009.5 253.67 1010 253.6 1010.5 253.67 1011 253.87 1011.5 254.21 1012 254.67 1012.5 255.25 1013 255.93 1013.5 256.7 1014 257.52 1016 257.52 1016.5 256.87 1017 256.27 1017.5 255.85 1018 255.63 1018.5 255.63 1019 255.85 1019.5 256.27 1020 256.87 1020.5 257.52 1024.5 257.52 1025 257.06 1025.5 256.24 1026 255.62 1026.5 255.23 1027 255.1 1027.5 255.23 1028 255.62 1028.5 255.15 1029 252.98 1029.5 251.77 1030 251.31 1030.5 251.35 1031 252.98 1031.5 255.15 1032 257.52 1038.5 257.52 1039 257.12 1039.5 256.64 1040 256.3 1040.5 256.12 1041 256.12 1041.5 256.3 1042 256.64 1042.5 257.12 1043 257.52 1046 257.52 1046.5 256.62 1047 255.42 1047.5 254.44 1048 253.71 1048.5 253.25 1049 253.1 1049.5 253.25 1050 253.71 1050.5 254.44 1051 255.42 1051.5 256.62 1052 257.52 1056 257.52 L1056 258.68 1052 258.68 1051.5 259.58 1051 260.78 1050.5 261.76 1050 262.49 1049.5 262.95 1049 263.1 1048.5 262.95 1048 262.49 1047.5 261.76 1047 260.78 1046.5 259.58 1046 258.68 1043 258.68 1042.5 259.08 1042 259.56 1041.5 259.9 1041 260.08 1040.5 260.08 1040 259.9 1039.5 259.56 1039 259.08 1038.5 258.68 1032 258.68 1031.5 261.05 1031 263.22 1030.5 264.85 1030 264.89 1029.5 264.43 1029 263.22 1028.5 261.05 1028 260.58 1027.5 260.97 1027 261.1 1026.5 260.97 1026 260.58 1025.5 259.96 1025 259.14 1024.5 258.68 1020.5 258.68 1020 259.33 1019.5 259.93 1019 260.35 1018.5 260.57 1018 260.57 1017.5 260.35 1017 259.93 1016.5 259.33 1016 258.68 1014 258.68 1013.5 259.5 1013 260.27 1012.5 260.95 1012 261.53 1011.5 261.99 1011 262.33 1010.5 262.53 1010 262.6 1009.5 262.53 1009 262.33 1008.5 261.99 1008 261.53 1007.5 260.95 1007 260.27 1006.5 259.5 1006 258.68 1004 258.68 1003.5 259.75 1003 261.15 1002.5 262.39 1002 263.47 1001.5 264.18 1001 264.89 1000.5 265.41 1000 266.08 999.5 266.19 999 266.08 998.5 265.82 998 265.28 997.5 264.53 997 263.47 996.5 262.39 996 261.15 995.5 259.75 995 258.68 985.5 258.68 985 259.57 984.5 260.3 984 260.8 983.5 261.07 983 261.07 982.5 260.8 982 260.3 981.5 259.57 981 258.68 974.5 258.68 974 259.36 973.5 260.3 973 260.89 972.5 261.1 972 260.89 971.5 260.3 971 259.36 970.5 258.68 969.5 258.68 969 259.32 968.5 260.33 968 261.2 967.5 261.93 967 262.49 966.5 262.88 966 263.08 965.5 263.08 965 262.88 964.5 262.49 964 261.93 963.5 261.2 963 260.33 962.5 259.32 962 258.68 959.5 258.68 959 259.56 958.5 260.77 958 261.82 957.5 262.69 957 263.37 956.5 263.84 956 264.07 955.5 264.07 955 263.84 954.5 263.37 954 262.69 953.5 261.82 953 260.77 952.5 259.56 952 258.68 950.5 258.68 950 258.99 949.5 259.71 949 260.3 948.5 260.74 948 261.01 947.5 261.1 947 261.01 946.5 260.74 946 260.3 945.5 259.71 945 258.99 944.5 258.68 939.5 258.68 939 259.66 938.5 260.89 938 261.82 937.5 262.4 937 262.6 936.5 262.4 936 261.82 935.5 260.89 935 259.66 934.5 258.68 929.5 258.68 929 258.97 928.5 259.65 928 260.17 927.5 260.49 927 260.6 926.5 260.49 926 260.17 925.5 259.65 925 258.97 924.5 258.68 923 258.68 922.5 258.85 922 259.56 921.5 260.28 921 260.99 920.5 261.71 920 262.42 919.5 263.14 919 263.85 918.5 264.58 918 265.21 917.5 265.53 917 266.14 916.5 266.75 916 267.48 915.5 268.09 915 268.71 914.5 268.94 914 269.28 913.5 269.63 913 269.66 912.5 268.95 912 268.24 911.5 267.78 911 267.27 910.5 266.76 910 265.87 909.5 265.38 909 264.9 908.5 265.47 908 266.07 907.5 266.68 907 267.78 906 267.78 905.5 267.37 905 267.37 904.5 266.32 904 265.57 903.5 264.48 903 264.32 902.5 264.86 902 265.6 901.5 266.34 901 267.08 900.5 267.7 900 268.19 899.5 268.53 899 269.01 898.5 269.5 898 270.53 897.5 270.79 897 271.05 896.5 270.93 896 271.18 895.5 271.43 895 271.45 894.5 271.7 894 271.94 893.5 272.52 893 272.9 892.5 273.4 892 273.54 891.5 274.03 891 274.52 890.5 276.02 890 277.04 889.5 278.07 889 279.15 888.5 280.18 888 281.61 887.5 283.11 887 284.92 886.5 286.73 886 287.91 885.5 289.17 885 290.44 884.5 291.61 884 291.36 883.5 291.1 883 290.29 882.5 290.04 882 289.8 881.5 288.6 881 287.68 880.5 286.76 880 285.82 879.5 285.12 879 284.41 878.5 285.11 878 285.52 877.5 287.07 877 287.44 876.5 288.94 876 290.43 875.5 290.64 875 290.88 874.5 291.13 874 291.12 873.5 291.37 873 291.61 872.5 292.11 872 292.35 871.5 292.59 871 293.7 870.5 293.7 870 293.45 869.5 292.53 869 292.28 868.5 292.04 868 291.66 867.5 291.9 867 292.15 866.5 293.95 866 294.2 865.5 294.71 865 294.13 864.5 294.86 864 295.59 863.5 297.47 863 298.56 862.5 300 862 301.54 861.5 302.98 861 304.87 860.5 305.71 860 307.56 859.5 309.41 859 312.44 858.5 313.71 858 314.99 857.5 316.73 857 315.62 856.5 314.52 856 310.99 855.5 309.76 855 308.36 854.5 307.77 854 306.34 853.5 306.65 853 305.88 852.5 306.19 852 306.49 851.5 310.56 851 312.78 850.5 315.01 850 316.35 849.5 318.49 849 320.63 848.5 322.73 848 323.44 847.5 322.73 847 323.35 846.5 322.62 846 320.39 845.5 315.88 845 313.74 844.5 311.59 844 310.61 843.5 307.55 843 308.02 842.5 311.07 842 315 841.5 318.94 841 323.04 840.5 327.21 840 331.38 839.5 334.69 839 337.22 838.5 339.74 838 337.91 837.5 336.66 837 335.4 836.5 336.45 836 335.48 835.5 334.52 835 331.15 834.5 330.8 834 330.44 833.5 332.28 833 332.23 832.5 332.49 832 329.6 831.5 329.85 831 330.09 830.5 330.07 830 329.72 829.5 329.37 829 328.84 828.5 331.55 828 334.25 827.5 335.8 827 333.62 826.5 331.44 826 330.21 825.5 326.89 825 323.58 824.5 322.33 824 320.17 823.5 318 823 316.99 822.5 314.78 822 312.57 821.5 309.17 821 309.48 820.5 309.8 820 309.33 819.5 309.64 819 307.16 818.5 304.23 818 301.04 817.5 297.11 817 294.38 816.5 291.33 816 288.29 815.5 284.48 815 282.4 814.5 280.32 814 279.13 813.5 277.23 813 275.33 812.5 273.62 812 271.69 811.5 266.56 811 261.35 810.5 258.68 810 259.43 809.5 260.51 809 261.39 808.5 262.05 808 262.46 807.5 262.6 807 262.46 806.5 262.05 806 261.39 805.5 260.51 805 259.43 804.5 258.68 804 258.69 803.5 259.66 803 260.52 802.5 261.27 802 261.91 801.5 262.42 801 262.8 800.5 263.02 800 263.1 799.5 263.02 799 262.8 798.5 262.42 798 261.91 797.5 261.27 797 260.52 796.5 259.66 796 258.69 795.5 259.36 795 260.3 794.5 260.89 794 261.1 793.5 260.89 793 260.3 792.5 259.36 792 258.85 791.5 260.07 791 261.03 790.5 261.71 790 262.06 789.5 262.06 789 261.71 788.5 261.03 788 260.07 787.5 259.32 787 260.27 786.5 260.99 786 261.45 785.5 261.6 785 261.45 784.5 260.99 784 260.27 783.5 259.32 783 258.68 781.5 258.68 781 259.19 780.5 260.1 780 260.91 779.5 261.6 779 262.18 778.5 262.63 778 262.93 777.5 263.08 777 263.08 776.5 262.93 776 262.63 775.5 262.18 775 261.6 774.5 260.91 774 260.1 773.5 259.19 773 258.68 771.5 258.68 771 259.57 770.5 260.22 770 260.56 769.5 260.56 769 260.22 768.5 259.57 768 258.68 765.5 258.68 765 259.23 764.5 260.19 764 261.05 763.5 261.82 763 262.49 762.5 263.06 762 263.51 761.5 263.84 761 264.03 760.5 264.1 760 264.03 759.5 263.84 759 263.51 758.5 263.06 758 262.49 757.5 261.82 757 261.05 756.5 260.19 756 259.23 755.5 258.68 754 258.68 753.5 259.28 753 259.79 752.5 260.07 752 260.07 751.5 259.79 751 259.28 750.5 258.68 749 258.68 748.5 259.71 748 262.22 747.5 264.03 747 264.88 746.5 265.03 746 264.03 745.5 262.22 745 259.71 744.5 258.68 738 258.68 737.5 259.34 737 260.38 736.5 261.32 736 262.13 735.5 262.82 735 263.37 734.5 263.77 734 264.02 733.5 264.1 733 264.02 732.5 263.77 732 263.37 731.5 262.82 731 262.13 730.5 261.32 730 260.38 729.5 259.34 729 258.68 726.5 258.68 726 259.49 725.5 260.24 725 260.89 724.5 261.41 724 261.79 723.5 262.02 723 262.1 722.5 262.02 722 261.79 721.5 261.41 721 260.89 720.5 260.24 720 259.49 719.5 258.68 716.5 258.68 716 259.33 715.5 259.93 715 260.35 714.5 260.57 714 260.57 713.5 260.35 713 259.93 712.5 259.33 712 258.68 706 258.68 705.5 258.69 705 259.17 704.5 259.56 704 259.86 703.5 260.04 703 260.1 702.5 260.04 702 259.86 701.5 259.56 701 259.17 700.5 258.69 700 258.68 693.5 258.68 693 260.47 692.5 262.39 692 263.96 691.5 265.08 691 265.78 690.5 266.02 690 265.78 689.5 265.03 689 263.96 688.5 262.39 688 260.47 687.5 258.68 687 258.68 686.5 259.01 686 259.75 685.5 260.39 685 260.9 684.5 261.29 684 261.52 683.5 261.6 683 261.52 682.5 261.29 682 260.9 681.5 260.39 681 259.75 680.5 259.01 680 258.68 679 258.68 678.5 259.58 678 260.78 677.5 261.76 677 262.49 676.5 262.95 676 263.1 675.5 262.95 675 262.49 674.5 261.76 674 260.78 673.5 259.58 673 258.68 672.5 259.32 672 260.27 671.5 260.99 671 261.45 670.5 261.6 670 261.45 669.5 260.99 669 260.27 668.5 259.32 668 258.68 665.5 258.68 665 259.48 664.5 260.61 664 261.55 663.5 262.3 663 262.81 662.5 263.07 662 263.07 661.5 262.81 661 262.3 660.5 261.55 660 260.61 659.5 259.48 659 259.6 658.5 261.1 658 262.6 657.5 263.1 657 263.6 656.5 264.1 656 264.62 655.5 265.12 655 265.67 654.5 266.41 654 267.14 653.5 267.91 653 268.64 652.5 269.87 652 271.1 651.5 272.33 651 273.56 650.5 274.11 650 274.81 649.5 275.5 649 275.92 648.5 274.84 648 273.76 647.5 272.27 647 271.36 646.5 270.44 646 269.47 645.5 268.56 645 268.86 644.5 269.85 644 270.17 643.5 270.49 643 270.9 642.5 271.95 642 273 641.5 275.13 641 276.61 640.5 278.09 640 278.73 639.5 277.49 639 276.25 638.5 275.35 638 274.26 637.5 273.18 637 272.33 636.5 271.65 636 271.39 635.5 271 635 270.74 634.5 270.48 634 270.63 633.5 271.14 633 271.65 632.5 272.05 632 272.56 631.5 273.72 631 275.27 630.5 277.06 630 278.84 629.5 280.26 629 281.91 628.5 283.56 628 282.39 627.5 280.88 627 279.24 626.5 277.08 626 275.32 625.5 273.57 625 272.97 624.5 272.48 624 271.99 623.5 272.23 623 271.72 622.5 271.46 622 270.48 621.5 270.24 621 269.99 620.5 269.73 620 269.98 619.5 270.22 619 271.27 618.5 271.52 618 271.78 617.5 271.26 617 271.16 616.5 271.06 616 271.29 615.5 271.19 615 271.04 614.5 270.6 614 270.45 613.5 270.3 613 270.35 612.5 270.09 612 269.84 611.5 269.26 611 269.01 610.5 268.77 610 268.5 609.5 268.25 609 268.01 608.5 268.12 608 267.86 607.5 268.63 607 268.96 606.5 269.7 606 270.44 605.5 271.29 605 270.79 604.5 270.3 604 270.19 603.5 269.68 603 269.16 602.5 267.59 602 266.62 601.5 265.64 601 264.78 600.5 263.85 600 261.55 599.5 259.25 599 258.68 597 258.68 596.5 258.95 596 260.31 595.5 261.39 595 262.16 594.5 262.55 594 262.55 593.5 262.16 593 261.39 592.5 260.31 592 258.95 591.5 258.68 590.5 258.68 590 259.79 589.5 261.03 589 261.82 588.5 262.1 588 261.82 587.5 261.03 587 259.79 586.5 258.68 584 258.68 583.5 259.57 583 260.3 582.5 260.8 582 261.07 581.5 261.07 581 260.8 580.5 260.3 580 259.57 579.5 258.68 574.5 258.68 574 259.71 573.5 260.74 573 261.1 572.5 260.74 572 259.71 571.5 258.68 567 258.68 566.5 259.23 566 261.05 565.5 262.49 565 263.51 564.5 264.03 564 264.03 563.5 263.51 563 262.49 562.5 261.05 562 259.23 561.5 258.68 559.5 258.68 559 259.17 558.5 259.86 558 260.1 557.5 259.86 557 259.17 556.5 258.68 555.5 258.68 555 258.83 554.5 259.44 554 259.96 553.5 260.4 553 260.74 552.5 260.97 552 261.09 551.5 261.09 551 260.97 550.5 260.74 550 260.4 549.5 259.96 549 259.44 548.5 258.83 548 258.68 545 258.68 544.5 259.5 544 260.27 543.5 260.95 543 261.53 542.5 261.99 542 262.33 541.5 262.53 541 262.6 540.5 262.53 540 262.33 539.5 261.99 539 261.53 538.5 260.95 538 260.27 537.5 259.5 537 258.68 531.5 258.68 531 258.79 530.5 259.87 530 260.64 529.5 261.05 529 261.05 528.5 260.64 528 261.23 527.5 261.45 527 261.68 526.5 261.91 526 262.13 525.5 262.36 525 262.23 524.5 261.73 524 261.23 523.5 260.73 523 260.23 522.5 260.35 522 261.1 521.5 261.85 521 262.6 520.5 263.35 520 263.73 518 263.73 517.5 263.35 517 262.6 516.5 261.85 516 261.1 515.5 260.35 515 260.4 514.5 261.25 514 262.1 513.5 262.95 513 263.8 512.5 263.93 512 263.33 511.5 262.73 511 262.12 510.5 261.53 510 261.35 509.5 261.6 509 261.85 508.5 262.1 508 262.35 507.5 263.1 507 264.24 506.5 265.6 506 266.85 505.5 268.1 505 268.7 504.5 268.44 504 268.19 503.5 268.06 503 267.8 502.5 267.29 502 266.36 501.5 265.61 501 264.86 500.5 264.1 500 264.31 499.5 265.55 499 266.65 498.5 267.88 498 269.1 497.5 269.21 497 268.48 496.5 267.76 496 267.36 495.5 266.61 495 265.23 494.5 263.23 494 261.23 493.5 259.23 493 261.56 492.5 263.89 492 265.98 491.5 270.05 491 273.6 490.5 277.14 490 277.59 489.5 277.19 489 276.8 488.5 276.84 488 276.44 487.5 276.12 487 275.36 486.5 275.12 486 274.87 485.5 275.32 485 274.56 484.5 273.29 484 271.86 483.5 270.6 483 269.35 482.5 269.16 482 269.42 481.5 269.67 481 269.21 480.5 269.45 480 269.82 479.5 270.39 479 270.88 478.5 271.37 478 272.55 477.5 273.45 477 274.73 476.5 275.88 476 277.15 475.5 278.42 475 279.03 474.5 278.51 474 278 473.5 277.53 473 277.02 472.5 276.5 472 275.96 471.5 275.45 471 275.62 470.5 274.99 470 275.15 469.5 275.31 469 276.24 468.5 276.41 468 276.59 467.5 276.56 467 276.9 466.5 277.23 466 277.43 465.5 277.77 465 278.1 464.5 278.3 464 278.63 463.5 278.88 463 278.86 462.5 279.1 462 279.35 461.5 280.33 460.5 280.33 460 279.75 459 279.75 458.5 279.56 458 279.56 457.5 279.72 457 280.91 456.5 281.25 456 281.59 455.5 281.67 455 282 454.5 282.34 454 282.43 453.5 283.18 453 283.93 452.5 284.6 452 285.35 451.5 286.09 451 288.23 450.5 290.69 450 291.67 449.5 291.52 449 291.03 448.5 290.53 448 290.65 447.5 290.53 447 290.78 446.5 291.28 446 291.54 445.5 291.8 445 292.7 444.5 293.48 444 294.25 443.5 293.86 443 294.61 442.5 294.86 442 294.79 441.5 294.54 441 294.28 440.5 294.73 440 294.34 439.5 293.83 439 293.31 438.5 292.79 438 292.28 437.5 291.74 437 292.49 436.5 293.25 436 294.2 435.5 294.95 435 295.84 434.5 296.55 434 297.55 433.5 298.55 433 300.78 432.5 301.81 432 302.84 431.5 303.06 431 304.08 430.5 305.09 430 305.15 429.5 305.4 429 305.65 428.5 306.81 428 307.07 427.5 307.83 427 309.15 426.5 310.43 426 311.7 425.5 310.08 425 311.77 424.5 313.94 424 318.31 423.5 320.57 423 322.83 422.5 322.78 422 322.29 421.5 321.79 421 321.17 420.5 320.68 420 320.55 419.5 323.72 419 323.98 418.5 324.24 418 321.06 417.5 321.8 417 323.02 416.5 327.1 416 328.38 415.5 329.66 415 329.83 414.5 330.56 414 331.28 413.5 332.74 413 335.1 412.5 337.47 412 337.47 411.5 339.76 411 338.92 410.5 338.51 410 337.67 409.5 336.82 409 338.59 408.5 337.05 408 335.5 407.5 334.76 407 336.29 406.5 337.82 406 334.58 405.5 332.31 405 330.05 404.5 326.48 404 324.25 403.5 319.31 403 315.83 402.5 314.56 402 317.1 401.5 314.57 401 314.22 400.5 313.87 400 314.95 399.5 313.43 399 311.91 398.5 310.29 398 308.77 397.5 307.63 397 306.79 396.5 306.03 396 305.27 395.5 303.25 395 302.43 394.5 301.51 394 301.24 393.5 300.31 393 298.24 392.5 295.91 392 292.63 391.5 289.35 391 286.27 390.5 283.37 390 280.48 389.5 277.14 389 275.33 388.5 273.51 388 272.64 387.5 271.18 387 270.21 386.5 268.88 386 267.94 385.5 266.15 385 263.51 384.5 260.87 384 258.68 381 258.68 380.5 258.8 380 259.24 379.5 259.4 379 259.24 378.5 258.8 378 258.68 375.5 258.68 375 258.8 374.5 259.24 374 259.4 373.5 259.24 373 258.8 372.5 258.68 369 258.68 368.5 259.05 368 259.36 367.5 259.36 367 259.05 366.5 258.68 364 258.68 363.5 259.56 363 260.77 362.5 261.82 362 262.69 361.5 263.37 361 263.84 360.5 264.07 360 264.07 359.5 263.84 359 263.37 358.5 262.69 358 261.82 357.5 260.77 357 259.56 356.5 258.68 350 258.68 349.5 258.84 349 259.93 348.5 260.52 348 260.52 347.5 259.93 347 258.84 346.5 258.68 344 258.68 343.5 258.73 343 259.5 342.5 259.5 342 258.73 341.5 258.68 326.5 258.68 326 259.57 325.5 260.22 325 260.56 324.5 260.56 324 260.22 323.5 259.57 323 258.68 313.5 258.68 313 258.8 312.5 259.75 312 260.1 311.5 259.75 311 258.8 310.5 258.68 308 258.68 307.5 259.57 307 260.66 306.5 261.36 306 261.6 305.5 261.36 305 260.66 304.5 259.57 304 258.68 296.5 258.68 296 258.74 295.5 259.81 295 260.76 294.5 261.59 294 262.29 293.5 262.85 293 263.26 292.5 263.52 292 263.6 291.5 263.52 291 263.26 290.5 262.85 290 262.29 289.5 261.59 289 260.76 288.5 259.81 288 258.74 287.5 258.68 281.5 258.68 281 260.27 280.5 261.45 280 261.45 279.5 260.27 279 258.68 267 258.68Z" fill="#fff"/>
<rect x="402.55" y="153" width="1.9" height="209" fill="#0000ff"/>
<g font-size="12" fill="#fff">
<text x="332.1" y="171.2">150</text>
<text x="458.6" y="171.2">200</text>
<text x="533.6" y="171.2">250</text>
<text x="583.85" y="171.2">300</text>
<text x="620.1" y="171.2">350</text>
<text x="1034.3" y="171.2">deg</text>
<text x="382.85" y="355.9">-20</text>
<text x="495.6" y="355.9">-15</text>
<text x="608.35" y="355.9">-10</text>
<text x="721.1" y="355.9">-5</text>
<text x="833.85" y="355.9">0</text>
<text x="946.6" y="355.9">5</text>
<text x="1039.3" y="355.9">ms</text>
</g>
<rect x="267" y="370.5" width="789" height="208.5" fill="#000"/>
<rect x="293" y="370.5" width="1" height="104.95" fill="#00ac00"/>
<rect x="329" y="370.5" width="1" height="104.95" fill="#d00000"/>
<rect x="360.5" y="370.5" width="1" height="104.95" fill="#00ac00"/>
<rect x="389" y="370.5" width="1" height="104.95" fill="#00ac00"/>
<rect x="413" y="370.5" width="1" height="104.95" fill="#00ac00"/>
<rect x="435.25" y="370.5" width="1" height="104.95" fill="#00ac00"/>
<rect x="455.5" y="370.5" width="1" height="104.95" fill="#d00000"/>
<rect x="473" y="370.5" width="1" height="104.95" fill="#00ac00"/>
<rect x="490" y="370.5" width="1" height="104.95" fill="#00ac00"/>
<rect x="504.25" y="370.5" width="1" height="104.95" fill="#00ac00"/>
<rect x="518.5" y="370.5" width="1" height="104.95" fill="#00ac00"/>
<rect x="530.5" y="370.5" width="1" height="104.95" fill="#d00000"/>
<rect x="542" y="370.5" width="1" height="104.95" fill="#00ac00"/>
<rect x="553.25" y="370.5" width="1" height="104.95" fill="#00ac00"/>
<rect x="563" y="370.5" width="1" height="104.95" fill="#00ac00"/>
<rect x="572.5" y="370.5" width="1" height="104.95" fill="#00ac00"/>
<rect x="580.75" y="370.5" width="1" height="104.95" fill="#d00000"/>
<rect x="589.5" y="370.5" width="1" height="104.95" fill="#00ac00"/>
<rect x="597" y="370.5" width="1" height="104.95" fill="#00ac00"/>
<rect x="603.75" y="370.5" width="1" height="104.95" fill="#00ac00"/>
<rect x="610.25" y="370.5" width="1" height="104.95" fill="#00ac00"/>
<rect x="617" y="370.5" width="1" height="104.95" fill="#d00000"/>
<rect x="289.1" y="475.45" width="1" height="103.55" fill="#00ac00"/>
<rect x="311.8" y="475.45" width="1" height="103.55" fill="#00ac00"/>
<rect x="334.3" y="475.45" width="1" height="103.55" fill="#00ac00"/>
<rect x="357" y="475.45" width="1" height="103.55" fill="#00ac00"/>
<rect x="379.75" y="475.45" width="1" height="103.55" fill="#d00000"/>
<rect x="402.3" y="475.45" width="1" height="103.55" fill="#00ac00"/>
<rect x="424.75" y="475.45" width="1" height="103.55" fill="#00ac00"/>
<rect x="447.5" y="475.45" width="1" height="103.55" fill="#00ac00"/>
<rect x="470" y="475.45" width="1" height="103.55" fill="#00ac00"/>
<rect x="492.5" y="475.45" width="1" height="103.55" fill="#d00000"/>
<rect x="514.8" y="475.45" width="1" height="103.55" fill="#00ac00"/>
<rect x="537.1" y="475.45" width="1" height="103.55" fill="#00ac00"/>
<rect x="560" y="475.45" width="1" height="103.55" fill="#00ac00"/>
<rect x="582.5" y="475.45" width="1" height="103.55" fill="#00ac00"/>
<rect x="605.25" y="475.45" width="1" height="103.55" fill="#d00000"/>
<rect x="627.5" y="475.45" width="1" height="103.55" fill="#00ac00"/>
<rect x="650" y="475.45" width="1" height="103.55" fill="#00ac00"/>
<rect x="672.75" y="475.45" width="1" height="103.55" fill="#00ac00"/>
<rect x="695.5" y="475.45" width="1" height="103.55" fill="#00ac00"/>
<rect x="718" y="475.45" width="1" height="103.55" fill="#d00000"/>
<rect x="740.3" y="475.45" width="1" height="103.55" fill="#00ac00"/>
<rect x="762.8" y="475.45" width="1" height="103.55" fill="#00ac00"/>
<rect x="785.5" y="475.45" width="1" height="103.55" fill="#00ac00"/>
<rect x="808" y="475.45" width="1" height="103.55" fill="#00ac00"/>
<rect x="830.75" y="475.45" width="1" height="103.55" fill="#d00000"/>
<rect x="852.9" y="475.45" width="1" height="103.55" fill="#00ac00"/>
<rect x="875.75" y="475.45" width="1" height="103.55" fill="#00ac00"/>
<rect x="898.25" y="475.45" width="1" height="103.55" fill="#00ac00"/>
<rect x="920.75" y="475.45" width="1" height="103.55" fill="#00ac00"/>
<rect x="944.2" y="475.45" width="1" height="103.55" fill="#d00000"/>
<rect x="966" y="475.45" width="1" height="103.55" fill="#00ac00"/>
<rect x="988.75" y="475.45" width="1" height="103.55" fill="#00ac00"/>
<rect x="1011.25" y="475.45" width="1" height="103.55" fill="#00ac00"/>
<rect x="1033.75" y="475.45" width="1" height="103.55" fill="#00ac00"/>
<path d="M267 474.87 271 474.87 271.5 474.23 272 472.26 272.5 470.69 273 469.59 273.5 469.21 274 469.21 274.5 469.59 275 470.69 275.5 472.26 276 474.23 276.5 474.87 278.5 474.87 279 474.85 279.5 473.88 280 473.05 280.5 472.37 281 471.86 281.5 471.55 282 471.45 282.5 471.55 283 471.86 283.5 472.37 284 473.05 284.5 473.88 285 474.85 285.5 474.87 289 474.87 289.5 474.48 290 473.67 290.5 472.97 291 472.39 291.5 471.94 292 471.63 292.5 471.47 293 471.47 293.5 471.63 294 471.94 294.5 472.39 295 472.97 295.5 473.67 296 474.48 296.5 474.87 303 474.87 303.5 474.75 304 473.8 304.5 473.45 305 473.8 305.5 474.75 306 474.87 314 474.87 314.5 474.33 315 473.44 315.5 472.73 316 472.24 316.5 471.98 317 471.98 317.5 472.24 318 472.73 318.5 473.44 319 474.33 319.5 474.87 326 474.87 326.5 474.86 327 473.99 327.5 473.51 328 473.51 328.5 473.99 329 474.86 329.5 474.87 341.5 474.87 342 474.4 342.5 473.12 343 473.12 343.5 474.4 344 474.87 357.5 474.87 358 474.19 358.5 473.25 359 472.66 359.5 472.45 360 472.66 360.5 473.25 361 474.19 361.5 474.87 362.5 474.87 363 472.92 363.5 471.06 364 469.86 364.5 469.45 365 469.86 365.5 471.06 366 472.92 366.5 474.87 370 474.87 370.5 473.06 371 470.77 371.5 468.4 372 465.94 372.5 465.62 373 465.29 373.5 464.98 374 464.66 374.5 465.18 375 466.15 375.5 466.64 376 467.13 376.5 467.22 377 467.54 377.5 467.86 378 468.35 378.5 468.66 379 467.58 379.5 466.56 380 465.49 380.5 464.7 381 464.03 381.5 463.53 382 463.02 382.5 463.73 383 463.97 383.5 464.22 384 464.43 384.5 464 385 463.57 385.5 462.89 386 462.46 386.5 463.17 387 463.49 387.5 464.23 388 464.6 388.5 465.29 389 453.2 389.5 453.2 390 452.11 390.5 452.11 391 452.65 391.5 453.61 392 454.69 392.5 455.78 393 456.97 393.5 457.4 394 457.83 394.5 458.52 395 458.03 395.5 457.54 396 456.53 396.5 456.03 397 456.97 397.5 457.89 398 458.83 398.5 459.78 399 460.47 399.5 461.2 400 461.92 400.5 462.59 401 462.28 401.5 461.98 402 461.14 402.5 461.53 403 462.62 403.5 464 404 465.06 404.5 465.37 405 465.5 405.5 465.81 406 466.13 406.5 465.65 407 465.28 407.5 464.92 408 465.18 408.5 466.29 409 467.39 409.5 468.72 410 469.34 410.5 469.95 411 470.57 411.5 471.2 412 472.06 412.5 472.91 413 473.77 413.5 474.87 415 474.87 415.5 474.7 416 473.48 416.5 472.52 417 471.84 417.5 471.49 418 471.49 418.5 471.84 419 472.52 419.5 473.48 420 474.7 420.5 474.87 424 474.87 424.5 474.35 425 473.44 425.5 472.69 426 472.09 426.5 471.68 427 471.48 427.5 471.48 428 471.68 428.5 472.09 429 472.69 429.5 473.44 430 474.35 430.5 474.87 434 474.87 434.5 474.69 435 474.13 435.5 473.77 436 473.65 436.5 473.77 437 474.13 437.5 474.69 438 474.87 443.5 474.87 444 474.56 444.5 473.25 445 472.54 445.5 472.54 446 473.25 446.5 474.56 447 474.87 447.5 474.87 448 474.75 448.5 473.8 449 473.45 449.5 473.8 450 474.75 450.5 474.87 451 474.87 451.5 474.53 452 473.09 452.5 472.06 453 471.52 453.5 471.52 454 472.06 454.5 473.09 455 474.53 455.5 474.87 460 474.87 460.5 473.57 461 472.37 461.5 471.95 462 472.37 462.5 473.57 463 474.87 465.5 474.87 466 474.82 466.5 473.96 467 473.65 467.5 473.96 468 474.82 468.5 474.87 469 474.87 469.5 474.21 470 473.54 470.5 473.54 471 474.21 471.5 474.87 500.5 474.87 501 474.21 501.5 473.95 502 474.21 502.5 474.87 507 474.87 507.5 474.24 508 474.24 508.5 474.87 514 474.87 514.5 474.41 515 473.59 515.5 472.97 516 472.58 516.5 472.45 517 472.58 517.5 472.97 518 473.59 518.5 474.41 519 474.87 521.5 474.87 522 473.89 522.5 472.66 523 471.73 523.5 471.15 524 470.95 524.5 471.15 525 471.73 525.5 472.66 526 473.89 526.5 474.87 528 474.87 528.5 474.26 529 473.31 529.5 472.52 530 471.94 530.5 471.57 531 471.45 531.5 471.57 532 471.94 532.5 472.52 533 473.31 533.5 474.26 534 474.87 536 474.87 536.5 474.75 537 474.21 537.5 473.8 538 473.54 538.5 473.45 539 473.54 539.5 473.8 540 474.21 540.5 474.75 541 474.87 542.5 474.87 543 474.45 543.5 473.55 544 472.65 544.5 471.75 545 470.85 545.5 469.95 546 469.25 546.5 468.5 547 467.76 547.5 467.22 548 466.49 548.5 466.1 549 465.7 549.5 465.31 550 464.92 550.5 464.22 551 464.02 551.5 463.82 552 463.58 552.5 463.38 553 463.18 553.5 463.58 554 463.93 554.5 464.27 555 464.52 555.5 464.87 556 464.37 556.5 463.99 557 463.49 557.5 462.99 558 462.42 558.5 462.93 559 463.43 559.5 463.81 560 464.32 560.5 464.83 561 464.64 561.5 464.39 562 464.14 562.5 463.93 563 463.67 563.5 463.77 564 463.71 564.5 463.81 565 463.91 565.5 463.89 566 463.02 566.5 462.14 567 461.79 567.5 460.94 568 460.1 568.5 458.62 569 457.37 569.5 456.11 570 454.59 570.5 453.31 571 453.31 571.5 452.97 572.5 452.97 573 455.23 573.5 456.06 574 456.89 574.5 457.12 575 457.77 575.5 458.41 576 458.93 576.5 459.58 577 460.08 577.5 460.29 578 460.64 578.5 461 579 461.65 579.5 461.22 580 460.02 580.5 458.85 581 457.65 581.5 458.57 582 459.81 582.5 460.72 583 461.62 583.5 461.68 584 462.29 584.5 462.89 585 463.66 585.5 464.26 586 463.91 586.5 463.61 587 463.26 587.5 462.92 588 462.61 588.5 461.99 589 461.37 589.5 460.14 590 459.49 590.5 460.37 591 462.04 591.5 462.87 592 463.69 592.5 464.53 593 464.19 593.5 463.85 594 462.99 594.5 462.64 595 462.28 595.5 461.8 596 460.76 596.5 459.72 597 459.68 597.5 460.65 598 461.62 598.5 462.02 599 463.03 599.5 463.67 600 464.19 600.5 464.44 601 464.68 601.5 465.11 602 465.35 602.5 465.6 603 465.29 603.5 465.54 604 465.8 604.5 466.04 605 465.64 605.5 465.24 606 464.94 606.5 464.54 607 464.42 607.5 464.12 608 464.27 608.5 464.43 609 464.97 609.5 464.92 610 464.68 610.5 464.41 611 464.16 611.5 463.92 612 463.4 612.5 463.3 613 463.2 613.5 463.3 614 463.2 614.5 462.95 615 462.26 615.5 461.85 616 461.44 616.5 461.38 617 461.23 617.5 461.33 618 460.99 618.5 461.1 619 461.2 619.5 462.57 620 463.47 620.5 464.37 621 465.26 621.5 465.86 622 466.47 622.5 466.58 623 467.23 623.5 467.48 624 468.14 624.5 468.38 625 468.62 625.5 468.82 626 467.59 626.5 466.36 627 464.93 627.5 463.68 628 464.18 628.5 464.82 629 465.32 629.5 465.81 630 466.2 630.5 466.92 631 467.63 631.5 468.24 632 468.09 632.5 467.08 633 465.99 633.5 464.97 634 463.94 634.5 463.38 635 463.23 635.5 463.08 636 462.81 636.5 463.58 637 464.36 637.5 465.3 638 466.06 638.5 469.5 639 472.8 639.5 474.87 646.5 474.87 647 473.84 647.5 472.81 648 472.45 648.5 472.81 649 473.73 649.5 473.42 650 473.14 650.5 472.89 651 472.66 651.5 472.46 652 472.3 652.5 472.16 653 472.06 653.5 471.99 654 471.95 654.5 471.95 655 471.99 655.5 472.06 656 472.16 656.5 472.3 657 472.46 657.5 472.66 658 472.89 658.5 473.14 659 473.42 659.5 473.73 660 474.06 660.5 474.41 661 474.12 661.5 473.28 662 472.45 662.5 472.2 663 471.95 663.5 471.7 664 471.45 664.5 471.12 665 470.78 665.5 470.45 666 470.12 666.5 469.78 667 469.45 667.5 469.95 668 470.09 668.5 469.95 669 470.09 669.5 470.52 670 471.21 670.5 472.14 671 472.95 671.5 473.45 672 473.95 672.5 474.45 673 474.12 673.5 473.78 674 472.66 674.5 471.73 675 471.15 675.5 470.95 676 471.15 676.5 471.2 677 470.95 677.5 470.7 678 470.45 678.5 469.95 679 469.45 679.5 468.96 680 468.47 680.5 468.72 681 468.27 681.5 468.54 682 469.46 682.5 470.67 683 472.28 683.5 474.24 684 473.95 684.5 473.45 685 472.95 685.5 472.62 686 472.14 686.5 471.21 687 470.52 687.5 470.09 688 469.95 688.5 470.09 689 470.52 689.5 471.21 690 472.14 690.5 472.95 691 473.45 691.5 473.95 692 474.45 692.5 473.78 693 473.12 693.5 472.45 694 471.12 694.5 469.78 695 468.51 695.5 467.77 696 466.91 696.5 466.16 697 465.41 697.5 466.49 698 467.86 698.5 469.45 699 470.78 699.5 472.12 700 473.45 700.5 472.45 701 471.45 701.5 470.45 702 469.7 702.5 469 703 468.25 703.5 467.62 704 468.35 704.5 469.09 705 469.7 705.5 470.45 706 471.45 706.5 472.45 707 473.45 707.5 472.95 708 472.45 708.5 470.95 709 469.45 709.5 467.84 710 466.32 710.5 466.66 711 466.92 711.5 467.26 712 467.6 712.5 468.26 713 468.58 713.5 469.07 714 469.45 714.5 469.95 715 470.45 715.5 469.62 716 468.82 716.5 467.99 717 466.96 717.5 466.11 718 465.26 718.5 466.06 719 466.56 719.5 467.05 720 467.51 720.5 468 721 468.5 721.5 468.82 722 469.45 722.5 468.56 723 468.2 723.5 467.48 724 466.75 724.5 466.02 725 465.68 725.5 465.34 726 465.11 726.5 464.78 727 464.44 727.5 465.12 728 465.88 728.5 466.63 729 467.22 729.5 467.74 730 468.25 730.5 468.95 731 469.45 731.5 468.95 732 468.21 732.5 467.69 733 467.18 733.5 468.03 734 468.8 734.5 469.7 735 470.45 735.5 470.62 736 470.78 736.5 470.95 737 471.12 737.5 471.28 738 471.45 738.5 470.78 739 470.12 739.5 469.45 740 468.8 740.5 468.14 741 467.65 741.5 467.17 742 466.68 742.5 465.91 743 465.41 743.5 465.91 744 466.19 744.5 466.71 745 467.22 745.5 466.89 746 466.39 746.5 465.88 747 465.6 747.5 465.11 748 464.61 748.5 464.9 749 465.4 749.5 465.9 750 466.42 750.5 466.92 751 467.42 751.5 468.12 752 468.61 752.5 469.1 753 469.45 753.5 470.2 754 470.95 754.5 471.7 755 472.45 755.5 472.7 756 472.95 756.5 473.2 757 473.45 757.5 472.7 758 471.95 758.5 471.2 759 470.45 759.5 469.62 760 468.75 760.5 468.07 761 467.25 761.5 466.43 762 465.35 762.5 465.86 763 466.36 763.5 467.16 764 467.65 764.5 468.38 765 468.96 765.5 469.7 766 470.45 766.5 470.7 767 470.95 767.5 471.2 768 471.45 768.5 470.45 769 469.45 769.5 468.28 770 467.25 770.5 466.99 771 466.91 771.5 466.66 772 466.41 772.5 466.18 773 465.93 773.5 465.68 774 465.58 774.5 466.32 775 467.06 775.5 467.48 776 468.25 776.5 468.77 777 469.45 777.5 469.95 778 470.45 778.5 470.2 779 469.95 779.5 469.7 780 469.45 780.5 469.95 781 470.45 781.5 470.95 782 471.45 782.5 471.7 783 471.95 783.5 472.2 784 472.45 784.5 471.7 785 470.95 785.5 470.2 786 469.45 786.5 468.62 787 467.86 787.5 467.02 788 466.26 788.5 465.75 789 465.4 789.5 464.9 790 464.4 790.5 464.67 791 465.12 791.5 465.56 792 465.91 792.5 466.01 793 466.11 793.5 466.63 794 466.72 794.5 466.82 795 466.87 795.5 467.28 796 467.69 796.5 468.37 797 468.77 797.5 469.26 798 469.7 798.5 470.2 799 470.7 799.5 471.2 800 471.45 800.5 471.7 801 471.95 801.5 472.2 802 472.45 802.5 472.6 803 472.75 803.5 472.9 804 473.05 804.5 473.2 805 472.8 805.5 472.4 806 472 806.5 471.6 807 471.2 807.5 470.3 808 469.53 808.5 468.32 809 467.39 809.5 466.47 810 466.46 810.5 466.36 811 466.26 811.5 466.06 812 465.96 812.5 466.6 813 467.34 813.5 467.97 814 468.61 814.5 466.13 815 463.35 815.5 460.58 816 456.42 816.5 452.36 817 448.31 817.5 445.76 818 442.33 818.5 440.43 819 439.74 819.5 439.38 820 439.03 820.5 437.84 821 437.21 821.5 436.58 822 435.03 822.5 434.06 823 433.1 823.5 432.98 824 432.03 824.5 430.95 825 430.5 825.5 429.43 826 427.83 826.5 427.08 827 425 827.5 422.93 828 419.28 828.5 416.41 829 413.55 829.5 416.21 830 419.03 830.5 421.84 831 422.39 831.5 420.63 832 418.87 832.5 414.55 833 412.63 833.5 410.7 834 410.75 834.5 408.88 835 406.39 835.5 401.54 836 398.97 836.5 396.39 837 396.25 837.5 394.1 838 391.95 838.5 390.63 839 391.35 839.5 392.07 840 393.67 840.5 397 841 400.34 841.5 403.6 842 406.46 842.5 409.32 843 411.03 843.5 412.86 844 413.58 844.5 416.6 845 417.3 845.5 414.54 846 409.27 846.5 406.4 847 403.54 847.5 407.19 848 409.38 848.5 411.56 849 413.7 849.5 416.2 850 418.7 850.5 420.38 851 421.29 851.5 420.57 852 421.89 852.5 421.19 853 419.36 853.5 416.22 854 414.34 854.5 412.47 855 416.26 855.5 419.03 856 421.79 856.5 422.22 857 424.06 857.5 425.9 858 428.11 858.5 429.57 859 430.66 859.5 433.2 860 434.25 860.5 433.64 861 432.09 861.5 431.45 862 430.82 862.5 430.67 863 430.42 863.5 430.17 864 431.24 864.5 431 865 431.91 865.5 431.24 866 432.19 866.5 433.14 867 433.6 867.5 432.21 868 430.83 868.5 428.75 869 427 869.5 425.25 870 422.49 870.5 422.18 871 421.86 871.5 422.85 872 422.55 872.5 424.38 873 426.58 873.5 428.39 874 430.21 874.5 429.18 875 428.48 875.5 427.78 876 425.39 876.5 423.26 877 421.13 877.5 416.73 878 419.96 878.5 423.2 879 428.97 879.5 432.04 880 433.26 880.5 434.45 881 435.68 881.5 436.91 882 437.63 882.5 438.7 883 439.76 883.5 439.85 884 440.21 884.5 440.57 885 440.84 885.5 441.16 886 441.47 886.5 441.68 887 442 887.5 440.73 888 438.99 888.5 437.71 889 436.42 889.5 435.44 890 434.34 890.5 433.25 891 434.07 891.5 433.15 892 432.23 892.5 430.26 893 431.05 893.5 433.56 894 436.98 894.5 439.43 895 440.66 895.5 441.33 896 442.57 896.5 443.82 897 443.99 897.5 445.09 898 446.19 898.5 448.81 899 449.85 899.5 450.89 900 451.58 900.5 450.35 901 449.12 901.5 447.92 902 446.69 902.5 447.61 903 447.66 903.5 448.61 904 449.57 904.5 451.27 905 451.96 905.5 452.66 906 451.89 906.5 451.64 907 451.39 907.5 452.38 908 452.13 908.5 452.13 909 452.27 909.5 452.51 910 452.76 910.5 451.89 911 452.52 911.5 453.54 912 455.1 912.5 456.09 913 457.09 913.5 458.59 914 459.98 914.5 461.37 915 462.62 915.5 461.7 916 460.77 916.5 460.04 917 459.13 917.5 458.82 918 457.8 918.5 457.48 919 457.17 919.5 458.87 920 459.92 920.5 460.97 921 461.65 921.5 462.36 922 463.07 922.5 463.93 923 464.23 923.5 464.54 924 464.85 924.5 465.16 925 465.4 925.5 465.36 926 465.61 926.5 465.86 927 465.89 927.5 466.54 928 467.18 928.5 467.86 929 468.5 929.5 466.66 930 465.01 930.5 463.2 931 462.12 931.5 462.17 932 461.82 932.5 461.46 933 462.83 933.5 464.38 934 465.94 934.5 467.52 935 467.83 935.5 468.14 936 468.5 936.5 468.8 937 468.1 937.5 467.29 938 466.57 938.5 466.39 939 466.89 939.5 467.25 940 467.6 940.5 466.87 941 466.25 941.5 465.63 942 464.8 942.5 465.16 943 465.53 943.5 466.34 944 467.42 944.5 469.23 945 470.89 945.5 472.76 946 474.87 952 474.87 952.5 474.19 953 473.25 953.5 472.66 954 472.45 954.5 472.66 955 473.25 955.5 474.19 956 474.87 960.5 474.87 961 474.53 961.5 473.09 962 472.06 962.5 471.52 963 471.52 963.5 472.06 964 473.09 964.5 474.53 965 473.38 965.5 471.7 966 470.33 966.5 469.51 967 468.9 967.5 468.58 968 468.79 968.5 469.41 969 470.33 969.5 471.7 970 473.38 970.5 474.87 978 474.87 978.5 474.17 979 472.08 979.5 470.33 980 468.94 980.5 467.98 981 467.61 981.5 467.61 982 468.09 982.5 469.12 983 470.33 983.5 472.08 984 474.17 984.5 474.87 991 474.87 991.5 473.98 992 473.25 992.5 472.75 993 472.48 993.5 472.48 994 472.75 994.5 473.25 995 472.77 995.5 471.79 996 471.06 996.5 470.6 997 470.45 997.5 470.6 998 471.06 998.5 471.79 999 472.77 999.5 472.89 1000 472.19 1000.5 471.95 1001 472.19 1001.5 472.89 1002 473.98 1002.5 474.87 1010 474.87 1010.5 474.75 1011 473.8 1011.5 473.45 1012 473.8 1012.5 474.75 1013 474.87 1018 474.87 1018.5 474.19 1019 473.53 1019.5 473.01 1020 472.66 1020.5 472.47 1021 472.47 1021.5 472.66 1022 473.01 1022.5 473.53 1023 474.19 1023.5 474.87 1024.5 474.87 1025 474.41 1025.5 473.59 1026 472.97 1026.5 472.58 1027 472.45 1027.5 472.58 1028 472.97 1028.5 473.59 1029 474.41 1029.5 474.87 1030.5 474.87 1031 474.61 1031.5 473.99 1032 473.59 1032.5 473.45 1033 473.59 1033.5 473.99 1034 474.61 1034.5 474.87 1042 474.87 1042.5 474.56 1043 473.84 1043.5 473.25 1044 472.81 1044.5 472.54 1045 472.45 1045.5 472.54 1046 472.81 1046.5 473.25 1047 473.84 1047.5 474.56 1048 474.87 1049.5 474.87 1050 474.58 1050.5 473.9 1051 473.38 1051.5 473.06 1052 472.95 1052.5 473.06 1053 473.38 1053.5 473.9 1054 474.58 1054.5 474.87 1056 474.87 L1056 476.03 1054.5 476.03 1054 476.32 1053.5 477 1053 477.52 1052.5 477.84 1052 477.95 1051.5 477.84 1051 477.52 1050.5 477 1050 476.32 1049.5 476.03 1048 476.03 1047.5 476.34 1047 477.06 1046.5 477.65 1046 478.09 1045.5 478.36 1045 478.45 1044.5 478.36 1044 478.09 1043.5 477.65 1043 477.06 1042.5 476.34 1042 476.03 1034.5 476.03 1034 476.29 1033.5 476.91 1033 477.31 1032.5 477.45 1032 477.31 1031.5 476.91 1031 476.29 1030.5 476.03 1029.5 476.03 1029 476.49 1028.5 477.31 1028 477.93 1027.5 478.32 1027 478.45 1026.5 478.32 1026 477.93 1025.5 477.31 1025 476.49 1024.5 476.03 1023.5 476.03 1023 476.71 1022.5 477.37 1022 477.89 1021.5 478.24 1021 478.43 1020.5 478.43 1020 478.24 1019.5 477.89 1019 477.37 1018.5 476.71 1018 476.03 1013 476.03 1012.5 476.15 1012 477.1 1011.5 477.45 1011 477.1 1010.5 476.15 1010 476.03 1002.5 476.03 1002 476.92 1001.5 478.01 1001 478.71 1000.5 478.95 1000 478.71 999.5 478.01 999 478.13 998.5 479.11 998 479.84 997.5 480.3 997 480.45 996.5 480.3 996 479.84 995.5 479.11 995 478.13 994.5 477.65 994 478.15 993.5 478.42 993 478.42 992.5 478.15 992 477.65 991.5 476.92 991 476.03 984.5 476.03 984 476.73 983.5 478.82 983 480.57 982.5 481.78 982 482.81 981.5 483.29 981 483.29 980.5 482.92 980 481.96 979.5 480.57 979 478.82 978.5 476.73 978 476.03 970.5 476.03 970 477.52 969.5 479.2 969 480.57 968.5 481.49 968 482.11 967.5 482.32 967 482 966.5 481.39 966 480.57 965.5 479.2 965 477.52 964.5 476.37 964 477.81 963.5 478.84 963 479.38 962.5 479.38 962 478.84 961.5 477.81 961 476.37 960.5 476.03 956 476.03 955.5 476.71 955 477.65 954.5 478.24 954 478.45 953.5 478.24 953 477.65 952.5 476.71 952 476.03 946 476.03 945.5 478.14 945 480.01 944.5 481.67 944 483.48 943.5 484.56 943 485.37 942.5 485.74 942 486.1 941.5 485.27 941 484.65 940.5 484.03 940 483.3 939.5 483.65 939 484.01 938.5 484.51 938 484.33 937.5 483.61 937 482.8 936.5 482.1 936 482.4 935.5 482.76 935 483.07 934.5 483.38 934 484.96 933.5 486.52 933 488.07 932.5 489.44 932 489.08 931.5 488.73 931 488.78 930.5 487.7 930 485.89 929.5 484.24 929 482.4 928.5 483.04 928 483.72 927.5 484.36 927 485.01 926.5 485.04 926 485.29 925.5 485.54 925 485.5 924.5 485.74 924 486.05 923.5 486.36 923 486.67 922.5 486.97 922 487.83 921.5 488.54 921 489.25 920.5 489.93 920 490.98 919.5 492.03 919 493.73 918.5 493.42 918 493.1 917.5 492.08 917 491.77 916.5 490.86 916 490.13 915.5 489.2 915 488.28 914.5 489.53 914 490.92 913.5 492.31 913 493.81 912.5 494.81 912 495.8 911.5 497.36 911 498.38 910.5 499.01 910 498.14 909.5 498.39 909 498.63 908.5 498.77 908 498.77 907.5 498.52 907 499.51 906.5 499.26 906 499.01 905.5 498.24 905 498.94 904.5 499.63 904 501.33 903.5 502.29 903 503.24 902.5 503.29 902 504.21 901.5 502.98 901 501.78 900.5 500.55 900 499.32 899.5 500.01 899 501.05 898.5 502.09 898 504.71 897.5 505.81 897 506.91 896.5 507.08 896 508.33 895.5 509.57 895 510.24 894.5 511.47 894 513.92 893.5 517.34 893 519.85 892.5 520.64 892 518.67 891.5 517.75 891 516.83 890.5 517.65 890 516.56 889.5 515.46 889 514.48 888.5 513.19 888 511.91 887.5 510.17 887 508.9 886.5 509.22 886 509.43 885.5 509.74 885 510.06 884.5 510.33 884 510.69 883.5 511.05 883 511.14 882.5 512.2 882 513.27 881.5 513.99 881 515.22 880.5 516.45 880 517.64 879.5 518.86 879 521.93 878.5 527.7 878 530.94 877.5 534.17 877 529.77 876.5 527.64 876 525.51 875.5 523.12 875 522.42 874.5 521.72 874 520.69 873.5 522.51 873 524.32 872.5 526.52 872 528.35 871.5 528.05 871 529.04 870.5 528.72 870 528.41 869.5 525.65 869 523.9 868.5 522.15 868 520.07 867.5 518.69 867 517.3 866.5 517.76 866 518.71 865.5 519.66 865 518.99 864.5 519.9 864 519.66 863.5 520.73 863 520.48 862.5 520.23 862 520.08 861.5 519.45 861 518.81 860.5 517.26 860 516.65 859.5 517.7 859 520.24 858.5 521.33 858 522.79 857.5 525 857 526.84 856.5 528.68 856 529.11 855.5 531.87 855 534.64 854.5 538.43 854 536.56 853.5 534.68 853 531.54 852.5 529.71 852 529.01 851.5 530.33 851 529.61 850.5 530.52 850 532.2 849.5 534.7 849 537.2 848.5 539.34 848 541.52 847.5 543.71 847 547.36 846.5 544.5 846 541.63 845.5 536.36 845 533.6 844.5 534.3 844 537.32 843.5 538.04 843 539.87 842.5 541.58 842 544.44 841.5 547.3 841 550.56 840.5 553.9 840 557.23 839.5 558.83 839 559.55 838.5 560.27 838 558.95 837.5 556.8 837 554.65 836.5 554.51 836 551.93 835.5 549.36 835 544.51 834.5 542.02 834 540.15 833.5 540.2 833 538.27 832.5 536.35 832 532.03 831.5 530.27 831 528.51 830.5 529.06 830 531.87 829.5 534.69 829 537.35 828.5 534.49 828 531.62 827.5 527.97 827 525.9 826.5 523.82 826 523.07 825.5 521.47 825 520.4 824.5 519.95 824 518.87 823.5 517.92 823 517.8 822.5 516.84 822 515.87 821.5 514.32 821 513.69 820.5 513.06 820 511.87 819.5 511.52 819 511.16 818.5 510.47 818 508.57 817.5 505.14 817 502.59 816.5 498.54 816 494.48 815.5 490.32 815 487.55 814.5 484.77 814 482.29 813.5 482.93 813 483.56 812.5 484.3 812 484.94 811.5 484.84 811 484.64 810.5 484.54 810 484.44 809.5 484.43 809 483.51 808.5 482.58 808 481.37 807.5 480.6 807 479.7 806.5 479.3 806 478.9 805.5 478.5 805 478.1 804.5 477.7 804 477.85 803.5 478 803 478.15 802.5 478.3 802 478.45 801.5 478.7 801 478.95 800.5 479.2 800 479.45 799.5 479.7 799 480.2 798.5 480.7 798 481.2 797.5 481.64 797 482.13 796.5 482.53 796 483.21 795.5 483.62 795 484.03 794.5 484.08 794 484.18 793.5 484.27 793 484.79 792.5 484.89 792 484.99 791.5 485.34 791 485.78 790.5 486.23 790 486.5 789.5 486 789 485.5 788.5 485.15 788 484.64 787.5 483.88 787 483.04 786.5 482.28 786 481.45 785.5 480.7 785 479.95 784.5 479.2 784 478.45 783.5 478.7 783 478.95 782.5 479.2 782 479.45 781.5 479.95 781 480.45 780.5 480.95 780 481.45 779.5 481.2 779 480.95 778.5 480.7 778 480.45 777.5 480.95 777 481.45 776.5 482.13 776 482.65 775.5 483.42 775 483.84 774.5 484.58 774 485.32 773.5 485.22 773 484.97 772.5 484.72 772 484.49 771.5 484.24 771 483.99 770.5 483.91 770 483.65 769.5 482.62 769 481.45 768.5 480.45 768 479.45 767.5 479.7 767 479.95 766.5 480.2 766 480.45 765.5 481.2 765 481.94 764.5 482.52 764 483.25 763.5 483.74 763 484.54 762.5 485.04 762 485.55 761.5 484.47 761 483.65 760.5 482.83 760 482.15 759.5 481.28 759 480.45 758.5 479.7 758 478.95 757.5 478.2 757 477.45 756.5 477.7 756 477.95 755.5 478.2 755 478.45 754.5 479.2 754 479.95 753.5 480.7 753 481.45 752.5 481.8 752 482.29 751.5 482.78 751 483.48 750.5 483.98 750 484.48 749.5 485 749 485.5 748.5 486 748 486.29 747.5 485.79 747 485.3 746.5 485.02 746 484.51 745.5 484.01 745 483.68 744.5 484.19 744 484.71 743.5 484.99 743 485.49 742.5 484.99 742 484.22 741.5 483.73 741 483.25 740.5 482.76 740 482.1 739.5 481.45 739 480.78 738.5 480.12 738 479.45 737.5 479.62 737 479.78 736.5 479.95 736 480.12 735.5 480.28 735 480.45 734.5 481.2 734 482.1 733.5 482.87 733 483.72 732.5 483.21 732 482.69 731.5 481.95 731 481.45 730.5 481.95 730 482.65 729.5 483.16 729 483.68 728.5 484.27 728 485.02 727.5 485.78 727 486.46 726.5 486.12 726 485.79 725.5 485.56 725 485.22 724.5 484.88 724 484.15 723.5 483.42 723 482.7 722.5 482.34 722 481.45 721.5 482.08 721 482.4 720.5 482.9 720 483.39 719.5 483.85 719 484.34 718.5 484.84 718 485.64 717.5 484.79 717 483.94 716.5 482.91 716 482.08 715.5 481.28 715 480.45 714.5 480.95 714 481.45 713.5 481.83 713 482.32 712.5 482.64 712 483.3 711.5 483.64 711 483.98 710.5 484.24 710 484.58 709.5 483.06 709 481.45 708.5 479.95 708 478.45 707.5 477.95 707 477.45 706.5 478.45 706 479.45 705.5 480.45 705 481.2 704.5 481.81 704 482.55 703.5 483.28 703 482.65 702.5 481.9 702 481.2 701.5 480.45 701 479.45 700.5 478.45 700 477.45 699.5 478.78 699 480.12 698.5 481.45 698 483.04 697.5 484.41 697 485.49 696.5 484.74 696 483.99 695.5 483.13 695 482.39 694.5 481.12 694 479.78 693.5 478.45 693 477.78 692.5 477.12 692 476.45 691.5 476.95 691 477.45 690.5 477.95 690 478.76 689.5 479.69 689 480.38 688.5 480.81 688 480.95 687.5 480.81 687 480.38 686.5 479.69 686 478.76 685.5 478.28 685 477.95 684.5 477.45 684 476.95 683.5 476.66 683 478.62 682.5 480.23 682 481.44 681.5 482.36 681 482.63 680.5 482.18 680 482.43 679.5 481.94 679 481.45 678.5 480.95 678 480.45 677.5 480.2 677 479.95 676.5 479.7 676 479.75 675.5 479.95 675 479.75 674.5 479.17 674 478.24 673.5 477.12 673 476.78 672.5 476.45 672 476.95 671.5 477.45 671 477.95 670.5 478.76 670 479.69 669.5 480.38 669 480.81 668.5 480.95 668 480.81 667.5 480.95 667 481.45 666.5 481.12 666 480.78 665.5 480.45 665 480.12 664.5 479.78 664 479.45 663.5 479.2 663 478.95 662.5 478.7 662 478.45 661.5 477.62 661 476.78 660.5 476.49 660 476.84 659.5 477.17 659 477.48 658.5 477.76 658 478.01 657.5 478.24 657 478.44 656.5 478.6 656 478.74 655.5 478.84 655 478.91 654.5 478.95 654 478.95 653.5 478.91 653 478.84 652.5 478.74 652 478.6 651.5 478.44 651 478.24 650.5 478.01 650 477.76 649.5 477.48 649 477.17 648.5 478.09 648 478.45 647.5 478.09 647 477.06 646.5 476.03 639.5 476.03 639 478.1 638.5 481.4 638 484.84 637.5 485.6 637 486.54 636.5 487.32 636 488.09 635.5 487.82 635 487.67 634.5 487.52 634 486.96 633.5 485.93 633 484.91 632.5 483.82 632 482.81 631.5 482.66 631 483.27 630.5 483.98 630 484.7 629.5 485.09 629 485.58 628.5 486.08 628 486.72 627.5 487.22 627 485.97 626.5 484.54 626 483.31 625.5 482.08 625 482.28 624.5 482.52 624 482.76 623.5 483.42 623 483.67 622.5 484.32 622 484.43 621.5 485.04 621 485.64 620.5 486.53 620 487.43 619.5 488.33 619 489.7 618.5 489.8 618 489.91 617.5 489.57 617 489.67 616.5 489.52 616 489.46 615.5 489.05 615 488.64 614.5 487.95 614 487.7 613.5 487.6 613 487.7 612.5 487.6 612 487.5 611.5 486.98 611 486.74 610.5 486.49 610 486.22 609.5 485.98 609 485.93 608.5 486.47 608 486.63 607.5 486.78 607 486.48 606.5 486.36 606 485.96 605.5 485.66 605 485.26 604.5 484.86 604 485.1 603.5 485.36 603 485.61 602.5 485.3 602 485.55 601.5 485.79 601 486.22 600.5 486.46 600 486.71 599.5 487.23 599 487.87 598.5 488.88 598 489.28 597.5 490.25 597 491.22 596.5 491.18 596 490.14 595.5 489.1 595 488.62 594.5 488.26 594 487.91 593.5 487.05 593 486.71 592.5 486.37 592 487.21 591.5 488.03 591 488.86 590.5 490.53 590 491.41 589.5 490.76 589 489.53 588.5 488.91 588 488.29 587.5 487.98 587 487.64 586.5 487.29 586 486.99 585.5 486.64 585 487.24 584.5 488.01 584 488.61 583.5 489.22 583 489.28 582.5 490.18 582 491.09 581.5 492.33 581 493.25 580.5 492.05 580 490.88 579.5 489.68 579 489.25 578.5 489.9 578 490.26 577.5 490.61 577 490.82 576.5 491.32 576 491.97 575.5 492.49 575 493.13 574.5 493.78 574 494.01 573.5 494.84 573 495.67 572.5 497.93 571.5 497.93 571 497.59 570.5 497.59 570 496.31 569.5 494.79 569 493.53 568.5 492.28 568 490.8 567.5 489.96 567 489.11 566.5 488.76 566 487.88 565.5 487.01 565 486.99 564.5 487.09 564 487.19 563.5 487.13 563 487.23 562.5 486.97 562 486.76 561.5 486.51 561 486.26 560.5 486.07 560 486.58 559.5 487.09 559 487.47 558.5 487.97 558 488.48 557.5 487.91 557 487.41 556.5 486.91 556 486.53 555.5 486.03 555 486.38 554.5 486.63 554 486.97 553.5 487.32 553 487.72 552.5 487.52 552 487.32 551.5 487.08 551 486.88 550.5 486.68 550 485.98 549.5 485.59 549 485.2 548.5 484.8 548 484.41 547.5 483.68 547 483.14 546.5 482.4 546 481.65 545.5 480.95 545 480.05 544.5 479.15 544 478.25 543.5 477.35 543 476.45 542.5 476.03 541 476.03 540.5 476.15 540 476.69 539.5 477.1 539 477.36 538.5 477.45 538 477.36 537.5 477.1 537 476.69 536.5 476.15 536 476.03 534 476.03 533.5 476.64 533 477.59 532.5 478.38 532 478.96 531.5 479.33 531 479.45 530.5 479.33 530 478.96 529.5 478.38 529 477.59 528.5 476.64 528 476.03 526.5 476.03 526 477.01 525.5 478.24 525 479.17 524.5 479.75 524 479.95 523.5 479.75 523 479.17 522.5 478.24 522 477.01 521.5 476.03 519 476.03 518.5 476.49 518 477.31 517.5 477.93 517 478.32 516.5 478.45 516 478.32 515.5 477.93 515 477.31 514.5 476.49 514 476.03 508.5 476.03 508 476.66 507.5 476.66 507 476.03 502.5 476.03 502 476.69 501.5 476.95 501 476.69 500.5 476.03 471.5 476.03 471 476.69 470.5 477.36 470 477.36 469.5 476.69 469 476.03 468.5 476.03 468 476.08 467.5 476.94 467 477.25 466.5 476.94 466 476.08 465.5 476.03 463 476.03 462.5 477.33 462 478.53 461.5 478.95 461 478.53 460.5 477.33 460 476.03 455.5 476.03 455 476.37 454.5 477.81 454 478.84 453.5 479.38 453 479.38 452.5 478.84 452 477.81 451.5 476.37 451 476.03 450.5 476.03 450 476.15 449.5 477.1 449 477.45 448.5 477.1 448 476.15 447.5 476.03 447 476.03 446.5 476.34 446 477.65 445.5 478.36 445 478.36 444.5 477.65 444 476.34 443.5 476.03 438 476.03 437.5 476.21 437 476.77 436.5 477.13 436 477.25 435.5 477.13 435 476.77 434.5 476.21 434 476.03 430.5 476.03 430 476.55 429.5 477.46 429 478.21 428.5 478.81 428 479.22 427.5 479.42 427 479.42 426.5 479.22 426 478.81 425.5 478.21 425 477.46 424.5 476.55 424 476.03 420.5 476.03 420 476.2 419.5 477.42 419 478.38 418.5 479.06 418 479.41 417.5 479.41 417 479.06 416.5 478.38 416 477.42 415.5 476.2 415 476.03 413.5 476.03 413 477.13 412.5 477.99 412 478.84 411.5 479.7 411 480.32 410.5 480.95 410 481.56 409.5 482.18 409 483.51 408.5 484.61 408 485.72 407.5 485.98 407 485.62 406.5 485.25 406 484.77 405.5 485.09 405 485.4 404.5 485.53 404 485.84 403.5 486.9 403 488.28 402.5 489.37 402 489.76 401.5 488.92 401 488.62 400.5 488.31 400 488.98 399.5 489.7 399 490.43 398.5 491.12 398 492.07 397.5 493.01 397 493.93 396.5 494.87 396 494.37 395.5 493.36 395 492.87 394.5 492.38 394 493.07 393.5 493.5 393 493.93 392.5 495.12 392 496.21 391.5 497.29 391 498.25 390.5 498.79 390 498.79 389.5 497.7 389 497.7 388.5 485.61 388 486.3 387.5 486.67 387 487.41 386.5 487.73 386 488.44 385.5 488.01 385 487.33 384.5 486.9 384 486.47 383.5 486.68 383 486.93 382.5 487.17 382 487.88 381.5 487.37 381 486.87 380.5 486.2 380 485.41 379.5 484.34 379 483.32 378.5 482.24 378 482.55 377.5 483.04 377 483.36 376.5 483.68 376 483.77 375.5 484.26 375 484.75 374.5 485.72 374 486.24 373.5 485.92 373 485.61 372.5 485.28 372 484.96 371.5 482.5 371 480.13 370.5 477.84 370 476.03 366.5 476.03 366 477.98 365.5 479.84 365 481.04 364.5 481.45 364 481.04 363.5 479.84 363 477.98 362.5 476.03 361.5 476.03 361 476.71 360.5 477.65 360 478.24 359.5 478.45 359 478.24 358.5 477.65 358 476.71 357.5 476.03 344 476.03 343.5 476.5 343 477.78 342.5 477.78 342 476.5 341.5 476.03 329.5 476.03 329 476.04 328.5 476.91 328 477.39 327.5 477.39 327 476.91 326.5 476.04 326 476.03 319.5 476.03 319 476.57 318.5 477.46 318 478.17 317.5 478.66 317 478.92 316.5 478.92 316 478.66 315.5 478.17 315 477.46 314.5 476.57 314 476.03 306 476.03 305.5 476.15 305 477.1 304.5 477.45 304 477.1 303.5 476.15 303 476.03 296.5 476.03 296 476.42 295.5 477.23 295 477.93 294.5 478.51 294 478.96 293.5 479.27 293 479.43 292.5 479.43 292 479.27 291.5 478.96 291 478.51 290.5 477.93 290 477.23 289.5 476.42 289 476.03 285.5 476.03 285 476.05 284.5 477.02 284 477.85 283.5 478.53 283 479.04 282.5 479.35 282 479.45 281.5 479.35 281 479.04 280.5 478.53 280 477.85 279.5 477.02 279 476.05 278.5 476.03 276.5 476.03 276 476.67 275.5 478.64 275 480.21 274.5 481.31 274 481.69 273.5 481.69 273 481.31 272.5 480.21 272 478.64 271.5 476.67 271 476.03 267 476.03Z" fill="#fff"/>
<rect x="387.35" y="370.5" width="1.9" height="208.5" fill="#0000ff"/>
<g font-size="12" fill="#fff">
<text x="332.1" y="388.7">150</text>
<text x="458.6" y="388.7">200</text>
<text x="533.6" y="388.7">250</text>
<text x="583.85" y="388.7">300</text>
<text x="620.1" y="388.7">350</text>
<text x="1034.3" y="388.7">deg</text>
<text x="382.85" y="572.9">-20</text>
<text x="495.6" y="572.9">-15</text>
<text x="608.35" y="572.9">-10</text>
<text x="721.1" y="572.9">-5</text>
<text x="833.85" y="572.9">0</text>
<text x="946.6" y="572.9">5</text>
<text x="1039.3" y="572.9">ms</text>
</g>
<rect x="267" y="588" width="789" height="208.5" fill="#000"/>
<rect x="414.6" y="588" width="67.5" height="208.5" fill="#000080"/>
<rect x="811.8" y="588" width="69" height="208.5" fill="#000080"/>
<rect x="315.75" y="588" width="1" height="208.5" fill="#00ac00"/>
<rect x="365" y="588" width="1" height="208.5" fill="#00ac00"/>
<rect x="413.8" y="588" width="1" height="208.5" fill="#00ac00"/>
<rect x="463.9" y="588" width="1" height="208.5" fill="#ec0000"/>
<rect x="513.75" y="588" width="1" height="208.5" fill="#00ac00"/>
<rect x="562.5" y="588" width="1" height="208.5" fill="#00ac00"/>
<rect x="611.75" y="588" width="1" height="208.5" fill="#00ac00"/>
<rect x="661.9" y="588" width="1" height="208.5" fill="#ec0000"/>
<rect x="710.75" y="588" width="1" height="208.5" fill="#00ac00"/>
<rect x="760.25" y="588" width="1" height="208.5" fill="#00ac00"/>
<rect x="809.1" y="588" width="1" height="208.5" fill="#00ac00"/>
<rect x="859" y="588" width="1" height="208.5" fill="#ec0000"/>
<rect x="908.25" y="588" width="1" height="208.5" fill="#00ac00"/>
<rect x="957.25" y="588" width="1" height="208.5" fill="#00ac00"/>
<rect x="1007" y="588" width="1" height="208.5" fill="#00ac00"/>
<path d="M267 691.97 270.5 691.97 271 690.72 271.5 690.05 272 690.72 272.5 691.97 275.5 691.97 276 689.62 276.5 688.55 277 689.62 277.5 691.97 285.5 691.97 286 691.09 286.5 690.55 287 691.09 287.5 691.97 293 691.97 293.5 690.72 294 690.05 294.5 690.72 295 691.97 308 691.97 308.5 690.72 309 690.05 309.5 690.72 310 691.97 311 691.97 311.5 691.29 312 689.76 312.5 689.76 313 691.29 313.5 691.97 326.5 691.97 327 691.29 327.5 689.76 328 689.76 328.5 691.29 329 691.97 329.5 688.83 330 686.81 330.5 686.81 331 688.83 331.5 691.97 335 691.97 335.5 691.16 336 689.24 336.5 688.55 337 689.24 337.5 691.16 338 691.97 343 691.97 343.5 691.51 344 690.07 344.5 689.55 345 690.07 345.5 691.51 346 691.97 346.5 691.97 347 691.5 347.5 690.22 348 690.22 348.5 691.5 349 691.97 350.5 691.97 351 690.35 351.5 689.55 352 690.35 352.5 691.97 353 691.97 353.5 689.62 354 688.55 354.5 689.62 355 691.97 359 691.97 359.5 691.71 360 690.69 360.5 690.69 361 691.71 361.5 691.97 374.5 691.97 375 691.71 375.5 691.09 376 690.69 376.5 690.55 377 690.69 377.5 691.09 378 691.71 378.5 691.97 391 691.97 391.5 690.35 392 689.55 392.5 690.35 393 691.97 394 691.97 394.5 690.07 395 688.73 395.5 688.73 396 690.07 396.5 691.97 400 691.97 400.5 691.51 401 690.07 401.5 689.55 402 690.07 402.5 691.51 403 691.97 406 691.97 406.5 691.09 407 690.55 407.5 691.09 408 691.97 413 691.97 413.5 690.35 414 689.55 414.5 690.35 415 691.97 415.5 691.97 416 690.35 416.5 689.55 417 690.35 417.5 691.97 420.5 691.97 421 691.09 421.5 690.55 422 691.09 422.5 691.97 423 691.97 423.5 688.72 424 672.48 424.5 649.04 425 635.22 425.5 627.34 426 619.55 426.5 623.56 427 628.67 427.5 634.66 428 641.03 428.5 646.98 429 653.39 429.5 658.51 430 663.52 430.5 667.54 431 671.46 431.5 674.9 432 677.38 432.5 680.17 433 681.76 433.5 683.61 434 684.95 434.5 686 435 687.05 435.5 687.58 436 688.11 436.5 688.64 437 688.55 437.5 688.3 438 688.05 438.5 688.8 439 689.55 439.5 688.8 440 688.05 440.5 688.7 441 689.35 441.5 689.04 442 688.73 442.5 687.44 443 684.66 443.5 681.15 444 676.64 444.5 673.1 445 669.94 445.5 672.53 446 676.21 446.5 680.3 447 684.44 447.5 686 448 687.63 448.5 688.72 449 689.13 449.5 689.55 450 688.95 450.5 688.35 451 689.05 451.5 689.75 452 689.35 452.5 688.95 453 688.55 453.5 689.05 454 689.55 454.5 689.05 455 688.55 455.5 688.05 456 688.55 456.5 689.05 457 689.55 457.5 689.22 458 688.88 458.5 688.55 459 689 459.5 689.46 460 686.69 460.5 681.23 461 673.24 461.5 659.69 462 647.03 462.5 633.6 463 622.99 463.5 619.3 464 622.86 464.5 628.39 465 633.86 465.5 641.02 466 647.46 466.5 653.39 467 659.45 467.5 665.16 468 669.17 468.5 673.6 469 676.93 469.5 680.77 470 682.56 470.5 684.34 471 685.21 471.5 686.31 472 687.55 472.5 688.11 473 688.66 473.5 689.22 474 689.47 474.5 689.26 475 689.05 475.5 689.48 476 689.92 476.5 690.35 477 690.08 477.5 689.82 478 689.55 478.5 689.88 479 690.22 479.5 690.55 480 690.38 480.5 690.22 481 690.05 481.5 690.55 482 691.05 482.5 691.97 483 691.97 483.5 688.16 484 686.55 484.5 688.16 485 691.97 485.5 691.97 486 688.89 486.5 687.55 487 688.89 487.5 691.97 488 691.97 488.5 687.73 489 683.75 489.5 687.73 490 687.19 490.5 682.21 491 687.19 491.5 691.97 492 690.44 492.5 687.89 493 687.89 493.5 690.44 494 691.97 494.5 689.81 495 686.49 495.5 686.49 496 689.81 496.5 691.97 497 689.18 497.5 685.35 498 685.27 498.5 689.18 499 683.1 499.5 682.95 500 691.97 500.5 688.89 501 687.55 501.5 688.89 502 691.97 502.5 691.97 503 691.68 503.5 690.48 504 690.05 504.5 690.48 505 691.68 505.5 691.97 506.5 691.97 507 690.69 507.5 689.68 508 689.68 508.5 690.69 509 691.97 512.5 691.97 513 690.41 513.5 689.04 514 688.55 514.5 689.04 515 690.41 515.5 691.97 519 691.97 519.5 691.71 520 690.69 520.5 690.69 521 691.71 521.5 691.97 524 691.97 524.5 691 525 690.16 525.5 690.16 526 691 526.5 691.97 530 691.97 530.5 691.07 531 688.89 531.5 687.7 532 687.7 532.5 688.89 533 691.07 533.5 691.97 541 691.97 541.5 690.81 542 688.42 542.5 687.55 543 688.42 543.5 690.81 544 688.16 544.5 686.55 545 688.16 545.5 691.97 558 691.97 558.5 691.31 559 690.64 559.5 690.64 560 691.31 560.5 691.97 563 691.97 563.5 689.45 564 687.77 564.5 687.77 565 689.45 565.5 690.02 566 686.96 566.5 686.96 567 690.02 567.5 691.97 568 689.81 568.5 686.47 569 686.47 569.5 689.81 570 691.97 570.5 691.97 571 689.45 571.5 687.77 572 687.77 572.5 689.45 573 691.97 573.5 690.44 574 687.89 574.5 687.89 575 690.44 575.5 691.97 576 691.97 576.5 690.02 577 686.96 577.5 686.96 578 690.02 578.5 689.18 579 685.17 579.5 685.17 580 689.18 580.5 688.16 581 686.55 581.5 688.16 582 691.97 582.5 691.97 583 688.89 583.5 687.55 584 688.89 584.5 691.97 585 691.97 585.5 687.79 586 686.08 586.5 687.79 587 691.97 588 691.97 588.5 691.29 589 689.76 589.5 689.76 590 691.29 590.5 691.97 592.5 691.97 593 690.72 593.5 690.05 594 690.72 594.5 691.97 595 691.97 595.5 690.72 596 690.05 596.5 690.72 597 691.97 599 691.97 599.5 687.73 600 683.64 600.5 687.73 601 691.97 601.5 691.97 602 690.35 602.5 690.35 603 691.97 604 691.97 604.5 691.16 605 689.24 605.5 688.55 606 689.24 606.5 691.16 607 691.97 608 691.97 608.5 689.45 609 687.77 609.5 687.77 610 689.45 610.5 691.97 611 691.97 611.5 689.81 612 686.37 612.5 686.37 613 689.81 613.5 691.97 619 691.97 619.5 691.16 620 689.24 620.5 688.55 621 689.24 621.5 690.81 622 688.42 622.5 687.55 623 688.42 623.5 690.81 624 691.16 624.5 689.24 625 688.55 625.5 689.24 626 691.16 626.5 691.97 629.5 691.97 630 690.35 630.5 689.55 631 690.35 631.5 691.97 634 691.97 634.5 691.85 635 690.9 635.5 690.55 636 690.9 636.5 691.85 637 691.97 641.5 691.97 642 691.51 642.5 690.07 643 689.55 643.5 690.07 644 691.51 644.5 691.97 647.5 691.97 648 691.66 648.5 690.35 649 689.64 649.5 689.64 650 690.35 650.5 691.66 651 691.97 653 691.97 653.5 690.44 654 687.89 654.5 687.89 655 690.44 655.5 685.2 656 682.52 656.5 685.2 657 691.97 657.5 687.79 658 686.16 658.5 687.79 659 691.97 659.5 690.64 660 688.01 660.5 687.05 661 688.01 661.5 690.64 662 691.97 662.5 687.79 663 686.04 663.5 687.79 664 691.97 664.5 691.97 665 688.89 665.5 687.55 666 688.89 666.5 691.97 667.5 691.97 668 690.07 668.5 688.73 669 688.73 669.5 690.07 670 691.97 672.5 691.97 673 691.36 673.5 689.62 674 688.67 674.5 688.67 675 689.62 675.5 691.36 676 691.97 678 691.97 678.5 690.07 679 688.73 679.5 688.73 680 690.07 680.5 691.97 681 691.97 681.5 690.07 682 688.73 682.5 688.73 683 690.07 683.5 691.97 684.5 691.97 685 689.99 685.5 689.05 686 689.99 686.5 691.97 691 691.97 691.5 689.87 692 688.16 692.5 687.55 693 688.16 693.5 689.87 694 691.97 698 691.97 698.5 689.45 699 687.77 699.5 687.77 700 689.45 700.5 691.97 703 691.97 703.5 691.71 704 690.69 704.5 690.69 705 691.71 705.5 691.97 708 691.97 708.5 690.07 709 688.73 709.5 688.73 710 690.07 710.5 691.97 711 691.97 711.5 690.44 712 687.89 712.5 687.89 713 690.44 713.5 691.97 714.5 691.97 715 686 715.5 683.6 716 686 716.5 691.97 717 691.97 717.5 688.89 718 687.55 718.5 688.89 719 691.97 719.5 691.97 720 690.35 720.5 689.55 721 690.35 721.5 691.97 725.5 691.97 726 690.07 726.5 688.73 727 688.73 727.5 690.07 728 691.97 729 691.97 729.5 689.87 730 688.16 730.5 687.55 731 688.16 731.5 689.87 732 691.97 733 691.97 733.5 690.07 734 688.73 734.5 688.73 735 690.07 735.5 691.97 736.5 691.97 737 687.43 737.5 685.68 738 687.43 738.5 691.97 742 691.97 742.5 691.09 743 690.55 743.5 691.09 744 691.97 747.5 691.97 748 688.89 748.5 687.55 749 688.89 749.5 689.77 750 685.92 750.5 684.52 751 685.92 751.5 689.77 752 691.97 752.5 689.62 753 688.55 753.5 689.62 754 691.97 757.5 691.97 758 688.89 758.5 687.55 759 688.89 759.5 691.97 760 686.69 760.5 684.68 761 686.69 761.5 691.97 762 691.97 762.5 688.89 763 687.55 763.5 688.89 764 691.97 764.5 690.81 765 688.42 765.5 687.55 766 688.42 766.5 690.81 767 691.97 767.5 690.99 768 688.83 768.5 688.05 769 688.83 769.5 690.99 770 691.97 770.5 691.97 771 691.29 771.5 689.76 772 689.76 772.5 691.29 773 691.97 774.5 691.97 775 691.16 775.5 689.24 776 688.55 776.5 689.24 777 691.16 777.5 691.97 778 688.89 778.5 687.55 779 688.89 779.5 691.97 781.5 691.97 782 690.99 782.5 688.83 783 688.05 783.5 688.83 784 690.99 784.5 691.97 785.5 691.97 786 689.18 786.5 685.01 787 685.01 787.5 689.18 788 691.97 788.5 690.44 789 687.89 789.5 687.89 790 690.44 790.5 689.81 791 686.37 791.5 686.37 792 689.81 792.5 691.97 793 691.97 793.5 691.68 794 690.48 794.5 690.05 795 690.48 795.5 691.68 796 691.97 798.5 691.97 799 691.09 799.5 690.55 800 691.09 800.5 691.97 802 691.97 802.5 691.29 803 689.76 803.5 689.76 804 691.29 804.5 691.97 805.5 691.97 806 691.51 806.5 690.07 807 689.55 807.5 690.07 808 691.51 808.5 691.97 812 691.97 812.5 687.59 813 684.8 813.5 684.8 814 687.59 814.5 691.97 815.5 691.97 816 691.51 816.5 690.07 817 689.55 817.5 690.07 818 691.51 818.5 691.97 819 691.97 819.5 689.62 820 688.55 820.5 689.62 821 691.97 821.5 683.22 822 675.96 822.5 671.45 823 669.89 823.5 671.86 824 676.29 824.5 683.19 825 691.97 825.5 691.97 826 691.51 826.5 690.07 827 689.55 827.5 690.07 828 691.51 828.5 691.97 832 691.97 832.5 691.71 833 690.69 833.5 690.69 834 691.71 834.5 691.97 835 691.97 835.5 690.12 836 686.77 836.5 685.34 837 686.77 837.5 684.97 838 682.05 838.5 679.59 839 677.82 839.5 676.74 840 676.54 840.5 676.91 841 677.98 841.5 679.71 842 682.08 842.5 684.99 843 688.41 843.5 691.97 844.5 691.97 845 690.38 845.5 689.2 846 689.2 846.5 690.38 847 691.97 847.5 691.97 848 690.81 848.5 688.42 849 687.55 849.5 688.42 850 690.81 850.5 691.97 851 685.48 851.5 680.96 852 679.84 852.5 681.38 853 685.74 853.5 691.97 854 690.12 854.5 686.77 855 685.67 855.5 686.77 856 690.12 856.5 689.42 857 684.9 857.5 683.29 858 684.96 858.5 689.42 859 691.97 860 691.97 860.5 672.81 861 653.89 861.5 642.13 862 639.1 862.5 638.35 863 639.93 863.5 639.04 864 642.15 864.5 643.7 865 645.16 865.5 644.92 866 646.95 866.5 648.98 867 654.64 867.5 658.41 868 662.18 868.5 665.81 869 670.01 869.5 674.22 870 677.74 870.5 681.06 871 683.56 871.5 685.68 872 687.1 872.5 688.5 873 689.64 873.5 691.97 875.5 691.97 876 690.81 876.5 688.42 877 687.55 877.5 688.42 878 690.81 878.5 691.97 879 691.16 879.5 689.24 880 688.55 880.5 689.24 881 691.16 881.5 691.97 884.5 691.97 885 690.69 885.5 689.68 886 689.68 886.5 690.69 887 691.97 887.5 690.12 888 686.77 888.5 685.36 889 686.77 889.5 686.2 890 682.76 890.5 682.76 891 686.47 891.5 690.81 892 688.42 892.5 687.55 893 688.42 893.5 690.81 894 691.97 894.5 691.97 895 691.71 895.5 690.69 896 690.69 896.5 691.71 897 691.97 897.5 691.97 898 690.41 898.5 689.04 899 688.55 899.5 689.04 900 690.41 900.5 691.97 901 691.97 901.5 691.09 902 690.55 902.5 691.09 903 691.97 904 691.97 904.5 691.66 905 690.35 905.5 689.64 906 689.64 906.5 690.35 907 691.66 907.5 691.97 912 691.97 912.5 691.71 913 690.69 913.5 690.69 914 691.71 914.5 691.97 918.5 691.97 919 689.62 919.5 688.55 920 689.62 920.5 691.97 923.5 691.97 924 691.51 924.5 690.07 925 689.55 925.5 690.07 926 691.51 926.5 691.36 927 689.62 927.5 688.67 928 688.67 928.5 689.62 929 691.36 929.5 691.97 930 691.71 930.5 690.69 931 690.69 931.5 691.71 932 691.97 934.5 691.97 935 691.29 935.5 689.76 936 689.76 936.5 691.29 937 691.97 944.5 691.97 945 689.81 945.5 686.68 946 686.68 946.5 689.81 947 691.97 947.5 691.29 948 689.76 948.5 689.76 949 691.29 949.5 691.97 950 691.97 950.5 690.86 951 688.83 951.5 688.83 952 690.86 952.5 691.97 953 691.97 953.5 690.81 954 688.42 954.5 687.55 955 688.42 955.5 690.81 956 691.97 962 691.97 962.5 691.31 963 690.64 963.5 690.64 964 691.31 964.5 691.97 967 691.97 967.5 690.86 968 688.83 968.5 688.83 969 689.81 969.5 686.48 970 686.48 970.5 689.81 971 691.97 971.5 691.97 972 691.09 972.5 690.55 973 691.09 973.5 691.97 980 691.97 980.5 691.29 981 689.76 981.5 689.76 982 691.29 982.5 691.97 983 691.97 983.5 690.35 984 689.55 984.5 690.35 985 691.97 991 691.97 991.5 691.09 992 690.55 992.5 691.09 993 691.97 999.5 691.97 1000 691.29 1000.5 689.76 1001 689.76 1001.5 691.29 1002 691.97 1006.5 691.97 1007 690.35 1007.5 689.55 1008 690.35 1008.5 691.97 1013.5 691.97 1014 691.91 1014.5 691.35 1015 691.91 1015.5 691.97 1028.5 691.97 1029 691.91 1029.5 691.35 1030 691.91 1030.5 691.97 1035 691.97 1035.5 691.5 1036 691.5 1036.5 691.97 1048.5 691.97 1049 691.09 1049.5 690.55 1050 691.09 1050.5 691.97 1056 691.97 L1056 693.13 1050.5 693.13 1050 694.01 1049.5 694.55 1049 694.01 1048.5 693.13 1036.5 693.13 1036 693.6 1035.5 693.6 1035 693.13 1030.5 693.13 1030 693.19 1029.5 693.75 1029 693.19 1028.5 693.13 1015.5 693.13 1015 693.19 1014.5 693.75 1014 693.19 1013.5 693.13 1008.5 693.13 1008 694.75 1007.5 695.55 1007 694.75 1006.5 693.13 1002 693.13 1001.5 693.81 1001 695.34 1000.5 695.34 1000 693.81 999.5 693.13 993 693.13 992.5 694.01 992 694.55 991.5 694.01 991 693.13 985 693.13 984.5 694.75 984 695.55 983.5 694.75 983 693.13 982.5 693.13 982 693.81 981.5 695.34 981 695.34 980.5 693.81 980 693.13 973.5 693.13 973 694.01 972.5 694.55 972 694.01 971.5 693.13 971 693.13 970.5 695.29 970 698.62 969.5 698.62 969 695.29 968.5 696.27 968 696.27 967.5 694.24 967 693.13 964.5 693.13 964 693.79 963.5 694.46 963 694.46 962.5 693.79 962 693.13 956 693.13 955.5 694.29 955 696.68 954.5 697.55 954 696.68 953.5 694.29 953 693.13 952.5 693.13 952 694.24 951.5 696.27 951 696.27 950.5 694.24 950 693.13 949.5 693.13 949 693.81 948.5 695.34 948 695.34 947.5 693.81 947 693.13 946.5 695.29 946 698.42 945.5 698.42 945 695.29 944.5 693.13 937 693.13 936.5 693.81 936 695.34 935.5 695.34 935 693.81 934.5 693.13 932 693.13 931.5 693.39 931 694.41 930.5 694.41 930 693.39 929.5 693.13 929 693.74 928.5 695.48 928 696.43 927.5 696.43 927 695.48 926.5 693.74 926 693.59 925.5 695.03 925 695.55 924.5 695.03 924 693.59 923.5 693.13 920.5 693.13 920 695.48 919.5 696.55 919 695.48 918.5 693.13 914.5 693.13 914 693.39 913.5 694.41 913 694.41 912.5 693.39 912 693.13 907.5 693.13 907 693.44 906.5 694.75 906 695.46 905.5 695.46 905 694.75 904.5 693.44 904 693.13 903 693.13 902.5 694.01 902 694.55 901.5 694.01 901 693.13 900.5 693.13 900 694.69 899.5 696.06 899 696.55 898.5 696.06 898 694.69 897.5 693.13 897 693.13 896.5 693.39 896 694.41 895.5 694.41 895 693.39 894.5 693.13 894 693.13 893.5 694.29 893 696.68 892.5 697.55 892 696.68 891.5 694.29 891 698.63 890.5 702.34 890 702.34 889.5 698.9 889 698.33 888.5 699.74 888 698.33 887.5 694.98 887 693.13 886.5 694.41 886 695.42 885.5 695.42 885 694.41 884.5 693.13 881.5 693.13 881 693.94 880.5 695.86 880 696.55 879.5 695.86 879 693.94 878.5 693.13 878 694.29 877.5 696.68 877 697.55 876.5 696.68 876 694.29 875.5 693.13 873.5 693.13 873 695.46 872.5 696.6 872 698 871.5 699.42 871 701.54 870.5 704.04 870 707.36 869.5 710.88 869 715.09 868.5 719.29 868 722.92 867.5 726.69 867 730.46 866.5 736.12 866 738.15 865.5 740.18 865 739.94 864.5 741.4 864 742.95 863.5 746.06 863 745.17 862.5 746.75 862 746 861.5 742.97 861 731.21 860.5 712.29 860 693.13 859 693.13 858.5 695.68 858 700.14 857.5 701.81 857 700.2 856.5 695.68 856 694.98 855.5 698.33 855 699.43 854.5 698.33 854 694.98 853.5 693.13 853 699.36 852.5 703.72 852 705.26 851.5 704.14 851 699.62 850.5 693.13 850 694.29 849.5 696.68 849 697.55 848.5 696.68 848 694.29 847.5 693.13 847 693.13 846.5 694.72 846 695.9 845.5 695.9 845 694.72 844.5 693.13 843.5 693.13 843 696.69 842.5 700.11 842 703.02 841.5 705.39 841 707.12 840.5 708.19 840 708.56 839.5 708.36 839 707.28 838.5 705.51 838 703.05 837.5 700.13 837 698.33 836.5 699.76 836 698.33 835.5 694.98 835 693.13 834.5 693.13 834 693.39 833.5 694.41 833 694.41 832.5 693.39 832 693.13 828.5 693.13 828 693.59 827.5 695.03 827 695.55 826.5 695.03 826 693.59 825.5 693.13 825 693.13 824.5 701.91 824 708.81 823.5 713.24 823 715.21 822.5 713.65 822 709.14 821.5 701.88 821 693.13 820.5 695.48 820 696.55 819.5 695.48 819 693.13 818.5 693.13 818 693.59 817.5 695.03 817 695.55 816.5 695.03 816 693.59 815.5 693.13 814.5 693.13 814 697.51 813.5 700.3 813 700.3 812.5 697.51 812 693.13 808.5 693.13 808 693.59 807.5 695.03 807 695.55 806.5 695.03 806 693.59 805.5 693.13 804.5 693.13 804 693.81 803.5 695.34 803 695.34 802.5 693.81 802 693.13 800.5 693.13 800 694.01 799.5 694.55 799 694.01 798.5 693.13 796 693.13 795.5 693.42 795 694.62 794.5 695.05 794 694.62 793.5 693.42 793 693.13 792.5 693.13 792 695.29 791.5 698.73 791 698.73 790.5 695.29 790 694.66 789.5 697.21 789 697.21 788.5 694.66 788 693.13 787.5 695.92 787 700.09 786.5 700.09 786 695.92 785.5 693.13 784.5 693.13 784 694.11 783.5 696.27 783 697.05 782.5 696.27 782 694.11 781.5 693.13 779.5 693.13 779 696.21 778.5 697.55 778 696.21 777.5 693.13 777 693.94 776.5 695.86 776 696.55 775.5 695.86 775 693.94 774.5 693.13 773 693.13 772.5 693.81 772 695.34 771.5 695.34 771 693.81 770.5 693.13 770 693.13 769.5 694.11 769 696.27 768.5 697.05 768 696.27 767.5 694.11 767 693.13 766.5 694.29 766 696.68 765.5 697.55 765 696.68 764.5 694.29 764 693.13 763.5 696.21 763 697.55 762.5 696.21 762 693.13 761.5 693.13 761 698.41 760.5 700.42 760 698.41 759.5 693.13 759 696.21 758.5 697.55 758 696.21 757.5 693.13 754 693.13 753.5 695.48 753 696.55 752.5 695.48 752 693.13 751.5 695.33 751 699.18 750.5 700.58 750 699.18 749.5 695.33 749 696.21 748.5 697.55 748 696.21 747.5 693.13 744 693.13 743.5 694.01 743 694.55 742.5 694.01 742 693.13 738.5 693.13 738 697.67 737.5 699.42 737 697.67 736.5 693.13 735.5 693.13 735 695.03 734.5 696.37 734 696.37 733.5 695.03 733 693.13 732 693.13 731.5 695.23 731 696.94 730.5 697.55 730 696.94 729.5 695.23 729 693.13 728 693.13 727.5 695.03 727 696.37 726.5 696.37 726 695.03 725.5 693.13 721.5 693.13 721 694.75 720.5 695.55 720 694.75 719.5 693.13 719 693.13 718.5 696.21 718 697.55 717.5 696.21 717 693.13 716.5 693.13 716 699.1 715.5 701.5 715 699.1 714.5 693.13 713.5 693.13 713 694.66 712.5 697.21 712 697.21 711.5 694.66 711 693.13 710.5 693.13 710 695.03 709.5 696.37 709 696.37 708.5 695.03 708 693.13 705.5 693.13 705 693.39 704.5 694.41 704 694.41 703.5 693.39 703 693.13 700.5 693.13 700 695.65 699.5 697.33 699 697.33 698.5 695.65 698 693.13 694 693.13 693.5 695.23 693 696.94 692.5 697.55 692 696.94 691.5 695.23 691 693.13 686.5 693.13 686 695.11 685.5 696.05 685 695.11 684.5 693.13 683.5 693.13 683 695.03 682.5 696.37 682 696.37 681.5 695.03 681 693.13 680.5 693.13 680 695.03 679.5 696.37 679 696.37 678.5 695.03 678 693.13 676 693.13 675.5 693.74 675 695.48 674.5 696.43 674 696.43 673.5 695.48 673 693.74 672.5 693.13 670 693.13 669.5 695.03 669 696.37 668.5 696.37 668 695.03 667.5 693.13 666.5 693.13 666 696.21 665.5 697.55 665 696.21 664.5 693.13 664 693.13 663.5 697.31 663 699.06 662.5 697.31 662 693.13 661.5 694.46 661 697.09 660.5 698.05 660 697.09 659.5 694.46 659 693.13 658.5 697.31 658 698.94 657.5 697.31 657 693.13 656.5 699.9 656 702.58 655.5 699.9 655 694.66 654.5 697.21 654 697.21 653.5 694.66 653 693.13 651 693.13 650.5 693.44 650 694.75 649.5 695.46 649 695.46 648.5 694.75 648 693.44 647.5 693.13 644.5 693.13 644 693.59 643.5 695.03 643 695.55 642.5 695.03 642 693.59 641.5 693.13 637 693.13 636.5 693.25 636 694.2 635.5 694.55 635 694.2 634.5 693.25 634 693.13 631.5 693.13 631 694.75 630.5 695.55 630 694.75 629.5 693.13 626.5 693.13 626 693.94 625.5 695.86 625 696.55 624.5 695.86 624 693.94 623.5 694.29 623 696.68 622.5 697.55 622 696.68 621.5 694.29 621 695.86 620.5 696.55 620 695.86 619.5 693.94 619 693.13 613.5 693.13 613 695.29 612.5 698.73 612 698.73 611.5 695.29 611 693.13 610.5 693.13 610 695.65 609.5 697.33 609 697.33 608.5 695.65 608 693.13 607 693.13 606.5 693.94 606 695.86 605.5 696.55 605 695.86 604.5 693.94 604 693.13 603 693.13 602.5 694.75 602 694.75 601.5 693.13 601 693.13 600.5 697.37 600 701.46 599.5 697.37 599 693.13 597 693.13 596.5 694.38 596 695.05 595.5 694.38 595 693.13 594.5 693.13 594 694.38 593.5 695.05 593 694.38 592.5 693.13 590.5 693.13 590 693.81 589.5 695.34 589 695.34 588.5 693.81 588 693.13 587 693.13 586.5 697.31 586 699.02 585.5 697.31 585 693.13 584.5 693.13 584 696.21 583.5 697.55 583 696.21 582.5 693.13 582 693.13 581.5 696.94 581 698.55 580.5 696.94 580 695.92 579.5 699.93 579 699.93 578.5 695.92 578 695.08 577.5 698.14 577 698.14 576.5 695.08 576 693.13 575.5 693.13 575 694.66 574.5 697.21 574 697.21 573.5 694.66 573 693.13 572.5 695.65 572 697.33 571.5 697.33 571 695.65 570.5 693.13 570 693.13 569.5 695.29 569 698.63 568.5 698.63 568 695.29 567.5 693.13 567 695.08 566.5 698.14 566 698.14 565.5 695.08 565 695.65 564.5 697.33 564 697.33 563.5 695.65 563 693.13 560.5 693.13 560 693.79 559.5 694.46 559 694.46 558.5 693.79 558 693.13 545.5 693.13 545 696.94 544.5 698.55 544 696.94 543.5 694.29 543 696.68 542.5 697.55 542 696.68 541.5 694.29 541 693.13 533.5 693.13 533 694.03 532.5 696.21 532 697.4 531.5 697.4 531 696.21 530.5 694.03 530 693.13 526.5 693.13 526 694.1 525.5 694.94 525 694.94 524.5 694.1 524 693.13 521.5 693.13 521 693.39 520.5 694.41 520 694.41 519.5 693.39 519 693.13 515.5 693.13 515 694.69 514.5 696.06 514 696.55 513.5 696.06 513 694.69 512.5 693.13 509 693.13 508.5 694.41 508 695.42 507.5 695.42 507 694.41 506.5 693.13 505.5 693.13 505 693.42 504.5 694.62 504 695.05 503.5 694.62 503 693.42 502.5 693.13 502 693.13 501.5 696.21 501 697.55 500.5 696.21 500 693.13 499.5 702.15 499 702 498.5 695.92 498 699.83 497.5 699.75 497 695.92 496.5 693.13 496 695.29 495.5 698.61 495 698.61 494.5 695.29 494 693.13 493.5 694.66 493 697.21 492.5 697.21 492 694.66 491.5 693.13 491 697.91 490.5 702.89 490 697.91 489.5 697.37 489 701.35 488.5 697.37 488 693.13 487.5 693.13 487 696.21 486.5 697.55 486 696.21 485.5 693.13 485 693.13 484.5 696.94 484 698.55 483.5 696.94 483 693.13 482.5 693.13 482 694.05 481.5 694.55 481 695.05 480.5 694.88 480 694.72 479.5 694.55 479 694.88 478.5 695.22 478 695.55 477.5 695.28 477 695.02 476.5 694.75 476 695.18 475.5 695.62 475 696.05 474.5 695.84 474 695.63 473.5 695.88 473 696.44 472.5 696.99 472 697.55 471.5 698.79 471 699.89 470.5 700.76 470 702.54 469.5 704.33 469 708.17 468.5 711.5 468 715.93 467.5 719.94 467 725.65 466.5 731.71 466 737.64 465.5 744.08 465 751.24 464.5 756.71 464 762.24 463.5 765.8 463 762.11 462.5 751.5 462 738.07 461.5 725.41 461 711.86 460.5 703.87 460 698.41 459.5 695.64 459 696.1 458.5 696.55 458 696.22 457.5 695.88 457 695.55 456.5 696.05 456 696.55 455.5 697.05 455 696.55 454.5 696.05 454 695.55 453.5 696.05 453 696.55 452.5 696.15 452 695.75 451.5 695.35 451 696.05 450.5 696.75 450 696.15 449.5 695.55 449 695.97 448.5 696.38 448 697.47 447.5 699.1 447 700.66 446.5 704.8 446 708.89 445.5 712.57 445 715.16 444.5 712 444 708.46 443.5 703.95 443 700.44 442.5 697.66 442 696.37 441.5 696.06 441 695.75 440.5 696.4 440 697.05 439.5 696.3 439 695.55 438.5 696.3 438 697.05 437.5 696.8 437 696.55 436.5 696.46 436 696.99 435.5 697.52 435 698.05 434.5 699.1 434 700.15 433.5 701.49 433 703.34 432.5 704.93 432 707.72 431.5 710.2 431 713.64 430.5 717.56 430 721.58 429.5 726.59 429 731.71 428.5 738.12 428 744.07 427.5 750.44 427 756.43 426.5 761.54 426 765.55 425.5 757.76 425 749.88 424.5 736.06 424 712.62 423.5 696.38 423 693.13 422.5 693.13 422 694.01 421.5 694.55 421 694.01 420.5 693.13 417.5 693.13 417 694.75 416.5 695.55 416 694.75 415.5 693.13 415 693.13 414.5 694.75 414 695.55 413.5 694.75 413 693.13 408 693.13 407.5 694.01 407 694.55 406.5 694.01 406 693.13 403 693.13 402.5 693.59 402 695.03 401.5 695.55 401 695.03 400.5 693.59 400 693.13 396.5 693.13 396 695.03 395.5 696.37 395 696.37 394.5 695.03 394 693.13 393 693.13 392.5 694.75 392 695.55 391.5 694.75 391 693.13 378.5 693.13 378 693.39 377.5 694.01 377 694.41 376.5 694.55 376 694.41 375.5 694.01 375 693.39 374.5 693.13 361.5 693.13 361 693.39 360.5 694.41 360 694.41 359.5 693.39 359 693.13 355 693.13 354.5 695.48 354 696.55 353.5 695.48 353 693.13 352.5 693.13 352 694.75 351.5 695.55 351 694.75 350.5 693.13 349 693.13 348.5 693.6 348 694.88 347.5 694.88 347 693.6 346.5 693.13 346 693.13 345.5 693.59 345 695.03 344.5 695.55 344 695.03 343.5 693.59 343 693.13 338 693.13 337.5 693.94 337 695.86 336.5 696.55 336 695.86 335.5 693.94 335 693.13 331.5 693.13 331 696.27 330.5 698.29 330 698.29 329.5 696.27 329 693.13 328.5 693.81 328 695.34 327.5 695.34 327 693.81 326.5 693.13 313.5 693.13 313 693.81 312.5 695.34 312 695.34 311.5 693.81 311 693.13 310 693.13 309.5 694.38 309 695.05 308.5 694.38 308 693.13 295 693.13 294.5 694.38 294 695.05 293.5 694.38 293 693.13 287.5 693.13 287 694.01 286.5 694.55 286 694.01 285.5 693.13 277.5 693.13 277 695.48 276.5 696.55 276 695.48 275.5 693.13 272.5 693.13 272 694.38 271.5 695.05 271 694.38 270.5 693.13 267 693.13Z" fill="#fff"/>
</svg>
<div id="lb"></div>
<div id="top">
 <div class="lbl" style="left:1px">bph</div>
 <div class="box" style="left:29px;width:170px"><div class="t">18000</div><div class="sep" style="left:140px"></div>
  <svg class="abs" style="left:149px;top:11px" width="10" height="6"><path d="M1 0.5h8L5 5z" fill="#8b8e8d"/></svg></div>
 <div class="lbl" style="left:207px">lift angle</div>
 <div class="box" style="left:261px;width:96px"><div class="t">52</div><div class="sep" style="left:39px"></div><div class="sep" style="left:66px"></div><div class="pm" style="left:39px">−</div><div class="pm" style="left:67px">+</div></div>
 <div class="lbl" style="left:365px">cal</div>
 <div class="box" style="left:389px;width:111px"><div class="t">+2.9</div><div class="sep" style="left:54px"></div><div class="sep" style="left:81px"></div><div class="pm" style="left:55px">−</div><div class="pm" style="left:83px">+</div></div>
 <div class="lbl" style="left:643px">Current snapshot:</div>
 <div class="box" style="left:749px;width:141px;background:#fff"></div>
 <div class="box" style="left:1033px;width:30px;background:linear-gradient(#efefee,#dcdcdb);border-color:#b4b4b2">
  <svg class="abs" style="left:9px;top:9px" width="10" height="9"><path d="M0 1h9M0 4.5h9M0 8h9" stroke="#1c1f20" stroke-width="1.4"/></svg></div>
</div>
<div id="tabs">
 <div class="tab" style="left:3px;width:102px"><span style="left:21px">Real time</span></div>
 <div class="tab" id="act"><span style="left:15px">Snapshot</span><span style="left:85px;color:#8f9191;font-weight:normal">×</span></div>
 <div class="tab" style="left:211px;width:110px"><span style="left:22px">Snapshot</span><span style="left:92px;font-weight:normal;color:#b0b1b0">×</span></div>
</div>
<div class="btn" style="left:6px;width:71px">&lt;</div>
<div class="btn" style="left:86px;width:93px">Center</div>
<div class="btn" style="left:188px;width:71px">&gt;</div>
</body></html>
